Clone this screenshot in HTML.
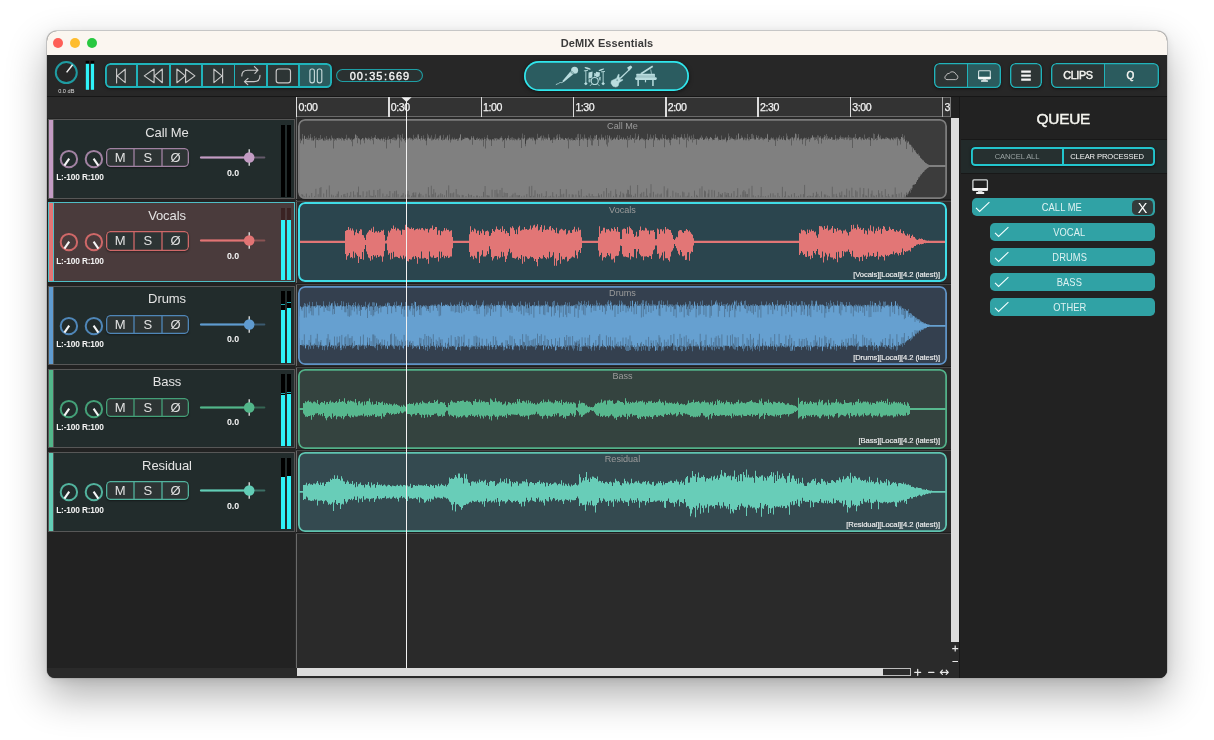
<!DOCTYPE html>
<html lang="en"><head><meta charset="utf-8"><title>DeMIX Essentials</title>
<style>
html,body{margin:0;padding:0;background:#fff;}
body{width:1214px;height:740px;overflow:hidden;position:relative;font-family:"Liberation Sans",sans-serif;}
#shadow{position:absolute;left:47px;top:31.4px;width:1120.2px;height:646.4px;border-radius:10px 10px 8px 8px;
  box-shadow:0 0 0 0.8px rgba(165,165,165,.7),0 17px 40px rgba(0,0,0,.32),0 2px 8px rgba(0,0,0,.09);}
#win{position:absolute;left:47px;top:31.4px;width:1120.2px;height:646.4px;border-radius:10px 10px 8px 8px;overflow:hidden;background:#222;}
#org{position:absolute;left:-47px;top:-31.4px;width:1214px;height:740px;will-change:transform;}
#org>*{position:absolute;}
.abs{position:absolute;}
/* title bar */
#tb{left:47px;top:31px;width:1120px;height:24px;background:#fbf6f0;}
#tb .dot{position:absolute;top:7.1px;width:10px;height:10px;border-radius:50%;}
#title{left:47px;top:31px;width:1120px;height:24px;line-height:24px;text-align:center;font-weight:700;font-size:11px;color:#3b3b3b;letter-spacing:.1px;}
/* toolbar */
#tool{left:47px;top:55px;width:1120px;height:41px;background:#272727;}
#tline{left:47px;top:95.5px;width:1120px;height:1.7px;background:#161616;}
.grp{--bc:#20b3ba;--bw:1.9px;border-radius:5.5px;background:#2d3535;overflow:hidden;box-shadow:0 1px 3px rgba(0,0,0,.5);}
.grp::after{content:"";position:absolute;left:0;top:0;right:0;bottom:0;border-radius:inherit;box-shadow:inset 0 0 0 var(--bw) var(--bc);}
.grp .dv{position:absolute;top:0;bottom:0;width:var(--bw);background:var(--bc);}
.grp .on{position:absolute;top:0;bottom:0;background:#2b5b5e;}
/* ruler */
#ruler{left:296px;top:97px;width:655px;height:20px;background:#333;box-sizing:border-box;border-top:1px solid #6a6a6a;border-bottom:1px solid #6a6a6a;}
.tick{width:1.5px;height:20px;top:97px;background:#dcdcdc;}
.rl{top:100.8px;font-size:10.6px;color:#f2f2f2;line-height:12px;letter-spacing:-.45px;-webkit-text-stroke:.25px #f2f2f2;white-space:nowrap;}
/* timeline */
#tl{left:295px;top:117px;width:656px;height:551px;background:#2a2a2a;}
#leftbg{left:47px;top:97px;width:248px;height:571px;background:#222;}
#lefttop{left:47px;top:97px;width:249px;height:21px;background:#2a2a2a;}
#botbar{left:47px;top:667.5px;width:1120px;height:11px;background:#2a2a2a;}
/* track header */
.th{left:48px;width:246.6px;height:79.6px;box-sizing:border-box;border:1px solid #575757;}
.th>*{position:absolute;}
.strip{left:0;top:0;bottom:0;width:3.5px;border-right:1px solid;box-sizing:content-box;}
.tname{left:0;width:236px;top:4.5px;text-align:center;font-size:13px;line-height:16px;color:#e4e4e4;letter-spacing:-.1px;}
.thsvg{left:-1px;top:-1px;}
.pan{left:7.2px;top:52.2px;font-size:8.3px;font-weight:700;color:#f4f4f4;line-height:10px;letter-spacing:-.15px;white-space:nowrap;}
.vol{left:164px;width:40px;text-align:center;top:47.5px;font-size:8.8px;font-weight:700;color:#f4f4f4;line-height:10px;}
.msb{left:57.3px;top:28px;width:83px;height:19.2px;border-radius:4.5px;background:#2d3434;display:flex;overflow:hidden;box-shadow:0 1px 2px rgba(0,0,0,.4);}
.msb::after{content:"";position:absolute;left:0;top:0;right:0;bottom:0;border-radius:inherit;box-shadow:inset 0 0 0 1.3px var(--mc);}
.msb span{flex:1;text-align:center;font-size:13px;line-height:19.8px;color:#e2e2e2;box-shadow:0.65px 0 0 var(--mc),inset -0.65px 0 0 var(--mc);}
.msb span:last-child{box-shadow:none;}
.mt{width:4.6px;overflow:hidden;}
.mt i{position:absolute;left:0;right:0;background:#2ff2f8;}
.mt b{position:absolute;left:0;right:0;height:1.2px;background:#1fa9b0;}
/* clips */
.clip{left:298px;width:649px;height:79.8px;border-radius:7px;overflow:hidden;}
.clip>*{position:absolute;}
.clip svg{left:0;top:0;}
.cb{left:0;top:0;right:0;bottom:0;border-radius:7px;box-sizing:border-box;}
.cl{left:0;right:0;top:2.2px;text-align:center;font-size:9.1px;line-height:10px;color:#9b9b9b;}
.ct{right:7px;bottom:3.2px;font-size:7.6px;line-height:9px;color:#f0f0f0;white-space:nowrap;letter-spacing:-.08px;-webkit-text-stroke:.15px #f0f0f0;}
.sep{left:296px;width:655px;height:1.1px;background:#1c1c1c;}
.sep.lt{background:#464646;height:.9px;}
/* right panel */
#rp{left:959.4px;top:97px;width:208px;height:582px;background:#222;border-left:1.4px solid #181818;box-sizing:border-box;}
#rp2{left:960.5px;top:140px;width:207px;height:33px;background:#222a2a;}
.hl{left:960.5px;width:207px;height:1.3px;background:#181818;}
#queue{left:959.8px;width:207px;top:109.2px;text-align:center;font-size:15.4px;line-height:20px;color:#f6f6f0;font-weight:400;-webkit-text-stroke:.45px #f6f6f0;letter-spacing:-.25px;}
.qb{font-size:7.6px;line-height:15px;text-align:center;letter-spacing:-.1px;}
.qi{background:#30a2a5;border-radius:4.8px;height:18.2px;color:#def2f2;font-size:10.6px;line-height:19px;text-align:center;letter-spacing:.1px;}
.qi span{display:inline-block;transform:scaleX(.88);position:relative;left:-3px;}
.qi.top span{left:-1.7px;}
.qi svg{position:absolute;left:3.5px;top:3.2px;}
#xbtn{left:1132.4px;top:199.5px;width:20.4px;height:15.7px;background:#333b3b;border-radius:4.5px;color:#fff;font-size:14.4px;line-height:16.6px;text-align:center;}

</style></head>
<body>
<div id="shadow"></div>
<div id="win"><div id="org">
<!-- title bar -->
<div id="tb">
  <div class="dot" style="left:6.2px;background:#fe5f57"></div>
  <div class="dot" style="left:22.9px;background:#febc2e"></div>
  <div class="dot" style="left:39.6px;background:#28c840"></div>
</div>
<div id="title">DeMIX Essentials</div>
<!-- base panels -->
<div id="leftbg"></div>
<div id="lefttop"></div>
<div id="tl"></div>
<div id="botbar"></div>
<div id="tool"></div>
<div id="tline"></div>
<!-- master knob + meter -->
<svg style="left:47px;top:55px" width="60" height="42" viewBox="47 55 60 42">
  <circle cx="66.3" cy="72.6" r="10.5" fill="none" stroke="#1f9ba1" stroke-width="2"/>
  <line x1="66.6" y1="72.4" x2="72.6" y2="64.8" stroke="#f4f4f4" stroke-width="1.5"/>
  <rect x="85.3" y="60.6" width="4.3" height="29.6" fill="#2a1b1b"/>
  <rect x="90.2" y="60.6" width="4.3" height="29.6" fill="#2a1b1b"/>
  <rect x="85.8" y="60.9" width="3.3" height="2.9" fill="#000"/>
  <rect x="90.8" y="60.9" width="3.3" height="2.9" fill="#000"/>
  <rect x="85.8" y="63.8" width="3.3" height="26" fill="#2ff2f8"/>
  <rect x="90.8" y="63.8" width="3.3" height="26" fill="#2ff2f8"/>
</svg>
<div style="left:47px;width:38.6px;top:88.3px;text-align:center;font-size:5.6px;line-height:7px;color:#ddd;">0.0 dB</div>
<!-- transport -->
<div class="grp" style="left:104.6px;top:63px;width:227.4px;height:25.4px;">
  <div class="on" style="left:194.8px;right:0"></div>
  <div class="dv" style="left:31.75px"></div>
  <div class="dv" style="left:64.25px"></div>
  <div class="dv" style="left:96.55px"></div>
  <div class="dv" style="left:128.95px"></div>
  <div class="dv" style="left:161.45px"></div>
  <div class="dv" style="left:193.85px"></div>
</div>
<svg style="left:100px;top:60px" width="240" height="32" viewBox="100 60 240 32" fill="none" stroke="#c9c9c9" stroke-width="1.15" stroke-linejoin="round" stroke-linecap="round">
  <!-- skip start -->
  <path d="M116.6 68.8V83M125.2 69.2V82.6L117.2 75.9Z"/>
  <!-- rewind -->
  <path d="M154.1 69V82.7L144.3 75.85ZM162.3 69V82.7L154.4 75.85Z"/>
  <!-- ff -->
  <path d="M176.9 69V82.7L185.3 75.85ZM185.6 69V82.7L194.9 75.85Z"/>
  <!-- skip end -->
  <path d="M222.6 68.8V83M213.9 69.2V82.6L222 75.9Z"/>
  <!-- loop -->
  <path d="M241.8 76C241.8 72.4 244 70.2 247.6 70.2H257.8M254.4 66.7L258 70.2L254.9 73.3"/>
  <path d="M260 75.4C260 79 257.8 81.6 254 81.6H244.6M248 78.4L244.4 81.6L247.8 84.7"/>
  <!-- stop -->
  <rect x="276.2" y="69" width="14.3" height="13.8" rx="2.4"/>
  <!-- pause -->
  <rect x="309.9" y="69" width="4.5" height="13.8" rx="2" stroke="#c4d8d9"/>
  <rect x="317.3" y="69" width="4.5" height="13.8" rx="2" stroke="#c4d8d9"/>
</svg>
<!-- time display -->
<div style="left:336.2px;top:69.2px;width:86.6px;height:13.2px;border-radius:6.5px;background:#2a3131;box-shadow:inset 0 0 0 1.1px #1e9ea4;"></div>
<div id="time" style="left:336.2px;top:70.1px;width:87.4px;height:13.2px;line-height:13.6px;text-align:center;font-size:11px;font-weight:400;-webkit-text-stroke:.35px #f6f6f6;color:#f6f6f6;letter-spacing:.95px;white-space:nowrap;">00<span style="margin:0 .7px">:</span>35<span style="margin:0 .7px">:</span>669</div>
<!-- instruments pill -->
<div style="left:523.8px;top:60.9px;width:165.6px;height:30.5px;border-radius:16px;background:#2b5c60;box-shadow:inset 0 0 0 1.7px #30e8ee,0 1px 4px rgba(0,0,0,.55);"></div>
<svg style="left:550px;top:62px" width="115" height="28" viewBox="550 62 115 28" fill="#b9dcde" stroke="none">
  <!-- microphone -->
  <g>
    <circle cx="574.6" cy="70.2" r="3.5"/>
    <path d="M573.5 74.1L570.6 71.2L562.4 81.1L563.5 82.2Z"/>
    <path d="M571.2 70.6L574.2 73.6M570.3 71.6L573.2 74.6" stroke="#2b5c60" stroke-width="0.55" fill="none"/>
    <path d="M563 81.9C561.6 83.6 560.8 82 559.6 82.7C558.6 83.3 558.6 84.1 557.4 83.9L556.2 84.5" fill="none" stroke="#b9dcde" stroke-width="0.85" stroke-linecap="round"/>
  </g>
  <!-- drums -->
  <g>
    <ellipse cx="587.6" cy="68.4" rx="3.3" ry="0.85" transform="rotate(16 587.6 68.4)"/>
    <ellipse cx="601.4" cy="69.7" rx="3" ry="0.8" transform="rotate(-18 601.4 69.7)"/>
    <path d="M585.85 70.4V83M603.15 71.6V83M583.9 70.9L588 70.3M601 71.9L605 71.4" fill="none" stroke="#b9dcde" stroke-width="0.9"/>
    <path d="M585.85 82L587.7 83.7L585.85 85.2L584 83.7ZM603.15 82L605 83.7L603.15 85.2L601.3 83.7Z"/>
    <path d="M588.6 72.4L592.6 71.6L592.2 77.6L588.4 78.8ZM596.2 71.8L600 72.6L599.6 76.2L597 77.2L594.6 75.6Z"/>
    <path d="M588.4 79.4L590.6 78.8L590.2 82.4L588.6 82.2ZM598.6 77.4L600.8 76.8L600.6 80.4L599.4 80.6Z" opacity=".8"/>
    <circle cx="594.7" cy="81" r="3.55" fill="none" stroke="#b9dcde" stroke-width="1.15"/>
    <path d="M591.6 84.2L590 85.8M597.8 84.2L599.4 85.8M594.7 73V76.6" fill="none" stroke="#b9dcde" stroke-width="0.9"/>
  </g>
  <!-- guitar -->
  <g>
    <path d="M628.9 69.2L629.8 70.1L620.6 79.1L619.6 78.1Z"/>
    <path d="M627.2 67.6L630.6 65.6L631.9 66.4L632.2 67.6L629.6 70.4L628 69.6Z"/>
    <path d="M618.36 74.33L619.25 74.58L618.95 76.8L619.94 78.39L620.3 79.8L622.7 79.5L622.81 80.17L619.1 82.49L618.11 85.95L615.89 87.09L612.92 86.2L610.94 83.23L611.44 80.76L616.63 78.29Z" stroke="#b9dcde" stroke-width="0.5" stroke-linejoin="round"/>
    <rect x="616.4" y="79.4" width="1.6" height="1.6" fill="#2b5c60" opacity=".45" transform="rotate(-45 617.2 80.2)"/>
  </g>
  <!-- piano -->
  <g>
    <path d="M640.2 73.3L652.3 65.5L653.2 66.9L641.9 74.3Z"/>
    <path d="M650.7 69.4L651.5 73.8" fill="none" stroke="#b9dcde" stroke-width="0.7"/>
    <rect x="636.4" y="73.8" width="18.5" height="3.8" rx="0.5"/>
    <rect x="635.1" y="77.2" width="21.7" height="2.7" rx="1.1"/>
    <rect x="637" y="75.6" width="17.3" height="1" fill="#2b5c60" opacity=".28"/>
    <rect x="637.4" y="79.6" width="1.5" height="6.4"/>
    <rect x="652.2" y="79.6" width="1.5" height="6.4"/>
    <rect x="644.9" y="79.6" width="1.2" height="2.7"/>
  </g>
</svg>
<!-- right buttons -->
<div class="grp" style="left:934.2px;top:63px;width:67px;height:25.4px;--bw:1.35px"><div class="on" style="left:33.4px;right:0"></div><div class="dv" style="left:32.6px"></div></div>
<div class="grp" style="left:1009.6px;top:63px;width:32.8px;height:25.4px;--bw:1.35px"></div>
<div class="grp" style="left:1050.8px;top:63px;width:108.2px;height:25.4px;--bw:1.35px"><div class="on" style="left:54.4px;right:0"></div><div class="dv" style="left:53.1px"></div></div>
<svg style="left:930px;top:60px" width="120" height="32" viewBox="930 60 120 32" fill="none" stroke="#b8b8b8" stroke-width="1" stroke-linejoin="round" stroke-linecap="round">
  <!-- cloud -->
  <path d="M947.6 79.6H955.6A2.6 2.6 0 0 0 956 74.5A3.8 3.8 0 0 0 949.2 73.4A2.4 2.4 0 0 0 946.4 75.4A2.15 2.15 0 0 0 947.6 79.6Z"/>
  <!-- monitor -->
  <rect x="978.6" y="70.7" width="11.7" height="8" rx="0.9" stroke="#cfe0e0" stroke-width="1.1"/>
  <rect x="978.1" y="76.7" width="12.7" height="2.5" rx="0.7" fill="#f2f6f6" stroke="none"/>
  <path d="M983 79.1H986L986.6 80.5H982.4Z" fill="#c4d4d4" stroke="none"/>
  <rect x="981" y="80.3" width="7" height="1.5" rx="0.6" fill="#eef4f4" stroke="none"/>
  <!-- hamburger -->
  <path d="M1021.2 71.6H1030.8M1021.2 75.6H1030.8M1021.2 79.6H1030.8" stroke="#f4f4f4" stroke-width="2.3" stroke-linecap="butt"/>
</svg>
<div style="left:1051px;width:54px;top:69px;text-align:center;font-size:10.8px;font-weight:400;-webkit-text-stroke:.45px #f4f4f0;line-height:13px;color:#f4f4f0;letter-spacing:-.35px;">CLIPS</div>
<div style="left:1104px;width:53px;top:69px;text-align:center;font-size:10px;font-weight:400;-webkit-text-stroke:.5px #f4f4f0;line-height:13.6px;color:#f4f4f0;">Q</div>
<!-- ruler -->
<div id="ruler"></div>
<div class="tick" style="left:295.9px"></div><div class="rl" style="left:298.5px">0:00</div>
<div class="tick" style="left:388.2px"></div><div class="rl" style="left:390.8px">0:30</div>
<div class="tick" style="left:480.5px"></div><div class="rl" style="left:483.1px">1:00</div>
<div class="tick" style="left:572.8px"></div><div class="rl" style="left:575.4px">1:30</div>
<div class="tick" style="left:665.0px"></div><div class="rl" style="left:667.7px">2:00</div>
<div class="tick" style="left:757.4px"></div><div class="rl" style="left:760.0px">2:30</div>
<div class="tick" style="left:849.6px"></div><div class="rl" style="left:852.3px">3:00</div>
<div class="tick" style="left:942.2px;width:1px;background:#b0b0b0"></div><div class="tick" style="left:950.2px;width:1px;background:#777"></div><div class="rl" style="left:944.6px;width:5.6px;overflow:hidden">3:30</div>
<div style="left:295.5px;top:117px;width:1px;height:551px;background:#6a6a6a"></div>
<!-- track separators -->
<div class="sep" style="top:199.3px"></div><div class="sep lt" style="top:200.8px"></div>
<div class="sep" style="top:282.5px"></div><div class="sep lt" style="top:284px"></div>
<div class="sep" style="top:365.7px"></div><div class="sep lt" style="top:367.2px"></div>
<div class="sep" style="top:448.9px"></div><div class="sep lt" style="top:450.4px"></div>
<div class="sep" style="top:532.1px"></div><div class="sep lt" style="top:533.4px"></div>

<div class="th" style="top:119.2px;background:#222c2c;border-color:#575757">
<div class="strip" style="background:#c39cc4;border-color:#575757"></div>
<div class="tname">Call Me</div>
<svg class="thsvg" width="247" height="80" viewBox="0 0 247 80">
<circle cx="20.9" cy="40.1" r="8.2" fill="none" stroke="#a182a2" stroke-width="2"/>
<line x1="21.2" y1="39.6" x2="16.4" y2="46.7" stroke="#f6f6f6" stroke-width="2.1" stroke-linecap="butt"/>
<circle cx="45.9" cy="40.1" r="8.2" fill="none" stroke="#a182a2" stroke-width="2"/>
<line x1="45.6" y1="39.6" x2="50.4" y2="46.7" stroke="#f6f6f6" stroke-width="2.1" stroke-linecap="butt"/>
<line x1="153" y1="38.5" x2="216.3" y2="38.5" stroke="#c39cc4" stroke-opacity="0.42" stroke-width="2.1" stroke-linecap="round"/>
<line x1="153" y1="38.5" x2="200" y2="38.5" stroke="#c39cc4" stroke-width="2.2" stroke-linecap="round"/>
<line x1="201.2" y1="30.2" x2="201.2" y2="46.8" stroke="#f4f4f4" stroke-width="1.2"/>
<circle cx="201.2" cy="38.5" r="5.3" fill="#c39cc4"/>
</svg>
<div class="pan">L:-100 R:100</div>
<div class="msb" style="--mc:#a182a2"><span>M</span><span>S</span><span>&Oslash;</span></div>
<div class="vol">0.0</div>
<div class="mt" style="left:231.8px;top:4.7px;height:71.7px;background:#000">
</div>
<div class="mt" style="left:237.9px;top:4.7px;height:71.7px;background:#000">
</div>
</div>
<div class="th" style="top:202.4px;background:#4a3b3c;border-color:#4fbec6">
<div class="strip" style="background:#e27474;border-color:#4fbec6"></div>
<div class="tname">Vocals</div>
<svg class="thsvg" width="247" height="80" viewBox="0 0 247 80">
<circle cx="20.9" cy="40.1" r="8.2" fill="none" stroke="#cf6868" stroke-width="2"/>
<line x1="21.2" y1="39.6" x2="16.4" y2="46.7" stroke="#f6f6f6" stroke-width="2.1" stroke-linecap="butt"/>
<circle cx="45.9" cy="40.1" r="8.2" fill="none" stroke="#cf6868" stroke-width="2"/>
<line x1="45.6" y1="39.6" x2="50.4" y2="46.7" stroke="#f6f6f6" stroke-width="2.1" stroke-linecap="butt"/>
<line x1="153" y1="38.5" x2="216.3" y2="38.5" stroke="#e27474" stroke-opacity="0.42" stroke-width="2.1" stroke-linecap="round"/>
<line x1="153" y1="38.5" x2="200" y2="38.5" stroke="#e27474" stroke-width="2.2" stroke-linecap="round"/>
<line x1="201.2" y1="30.2" x2="201.2" y2="46.8" stroke="#f4f4f4" stroke-width="1.2"/>
<circle cx="201.2" cy="38.5" r="5.3" fill="#e27474"/>
</svg>
<div class="pan">L:-100 R:100</div>
<div class="msb" style="--mc:#cf6868"><span>M</span><span>S</span><span>&Oslash;</span></div>
<div class="vol">0.0</div>
<div class="mt" style="left:231.8px;top:4.7px;height:71.7px;background:#3a2323">
<i style="top:11.5px;height:60.2px"></i>
</div>
<div class="mt" style="left:237.9px;top:4.7px;height:71.7px;background:#3a2323">
<i style="top:11.5px;height:60.2px"></i>
</div>
</div>
<div class="th" style="top:285.6px;background:#222c2c;border-color:#575757">
<div class="strip" style="background:#5f9bd0;border-color:#575757"></div>
<div class="tname">Drums</div>
<svg class="thsvg" width="247" height="80" viewBox="0 0 247 80">
<circle cx="20.9" cy="40.1" r="8.2" fill="none" stroke="#4f86b8" stroke-width="2"/>
<line x1="21.2" y1="39.6" x2="16.4" y2="46.7" stroke="#f6f6f6" stroke-width="2.1" stroke-linecap="butt"/>
<circle cx="45.9" cy="40.1" r="8.2" fill="none" stroke="#4f86b8" stroke-width="2"/>
<line x1="45.6" y1="39.6" x2="50.4" y2="46.7" stroke="#f6f6f6" stroke-width="2.1" stroke-linecap="butt"/>
<line x1="153" y1="38.5" x2="216.3" y2="38.5" stroke="#5f9bd0" stroke-opacity="0.42" stroke-width="2.1" stroke-linecap="round"/>
<line x1="153" y1="38.5" x2="200" y2="38.5" stroke="#5f9bd0" stroke-width="2.2" stroke-linecap="round"/>
<line x1="201.2" y1="30.2" x2="201.2" y2="46.8" stroke="#f4f4f4" stroke-width="1.2"/>
<circle cx="201.2" cy="38.5" r="5.3" fill="#5f9bd0"/>
</svg>
<div class="pan">L:-100 R:100</div>
<div class="msb" style="--mc:#4f86b8"><span>M</span><span>S</span><span>&Oslash;</span></div>
<div class="vol">0.0</div>
<div class="mt" style="left:231.8px;top:4.7px;height:71.7px;background:#000">
<i style="top:18.9px;height:52.8px"></i>
<b style="top:12.7px"></b>
</div>
<div class="mt" style="left:237.9px;top:4.7px;height:71.7px;background:#000">
<i style="top:17.2px;height:54.5px"></i>
<b style="top:10.7px"></b>
</div>
</div>
<div class="th" style="top:368.8px;background:#222c2c;border-color:#575757">
<div class="strip" style="background:#52b68a;border-color:#575757"></div>
<div class="tname">Bass</div>
<svg class="thsvg" width="247" height="80" viewBox="0 0 247 80">
<circle cx="20.9" cy="40.1" r="8.2" fill="none" stroke="#44a078" stroke-width="2"/>
<line x1="21.2" y1="39.6" x2="16.4" y2="46.7" stroke="#f6f6f6" stroke-width="2.1" stroke-linecap="butt"/>
<circle cx="45.9" cy="40.1" r="8.2" fill="none" stroke="#44a078" stroke-width="2"/>
<line x1="45.6" y1="39.6" x2="50.4" y2="46.7" stroke="#f6f6f6" stroke-width="2.1" stroke-linecap="butt"/>
<line x1="153" y1="38.5" x2="216.3" y2="38.5" stroke="#52b68a" stroke-opacity="0.42" stroke-width="2.1" stroke-linecap="round"/>
<line x1="153" y1="38.5" x2="200" y2="38.5" stroke="#52b68a" stroke-width="2.2" stroke-linecap="round"/>
<line x1="201.2" y1="30.2" x2="201.2" y2="46.8" stroke="#f4f4f4" stroke-width="1.2"/>
<circle cx="201.2" cy="38.5" r="5.3" fill="#52b68a"/>
</svg>
<div class="pan">L:-100 R:100</div>
<div class="msb" style="--mc:#44a078"><span>M</span><span>S</span><span>&Oslash;</span></div>
<div class="vol">0.0</div>
<div class="mt" style="left:231.8px;top:4.7px;height:71.7px;background:#000">
<i style="top:21px;height:50.7px"></i>
<b style="top:18.8px"></b>
</div>
<div class="mt" style="left:237.9px;top:4.7px;height:71.7px;background:#000">
<i style="top:19.5px;height:52.2px"></i>
<b style="top:17.5px"></b>
</div>
</div>
<div class="th" style="top:452px;background:#222c2c;border-color:#575757">
<div class="strip" style="background:#62cdb6;border-color:#575757"></div>
<div class="tname">Residual</div>
<svg class="thsvg" width="247" height="80" viewBox="0 0 247 80">
<circle cx="20.9" cy="40.1" r="8.2" fill="none" stroke="#52b39e" stroke-width="2"/>
<line x1="21.2" y1="39.6" x2="16.4" y2="46.7" stroke="#f6f6f6" stroke-width="2.1" stroke-linecap="butt"/>
<circle cx="45.9" cy="40.1" r="8.2" fill="none" stroke="#52b39e" stroke-width="2"/>
<line x1="45.6" y1="39.6" x2="50.4" y2="46.7" stroke="#f6f6f6" stroke-width="2.1" stroke-linecap="butt"/>
<line x1="153" y1="38.5" x2="216.3" y2="38.5" stroke="#62cdb6" stroke-opacity="0.42" stroke-width="2.1" stroke-linecap="round"/>
<line x1="153" y1="38.5" x2="200" y2="38.5" stroke="#62cdb6" stroke-width="2.2" stroke-linecap="round"/>
<line x1="201.2" y1="30.2" x2="201.2" y2="46.8" stroke="#f4f4f4" stroke-width="1.2"/>
<circle cx="201.2" cy="38.5" r="5.3" fill="#62cdb6"/>
</svg>
<div class="pan">L:-100 R:100</div>
<div class="msb" style="--mc:#52b39e"><span>M</span><span>S</span><span>&Oslash;</span></div>
<div class="vol">0.0</div>
<div class="mt" style="left:231.8px;top:4.7px;height:71.7px;background:#000">
<i style="top:19.8px;height:51.9px"></i>
</div>
<div class="mt" style="left:237.9px;top:4.7px;height:71.7px;background:#000">
<i style="top:18.3px;height:53.4px"></i>
</div>
</div>
<div class="clip" style="top:119.2px;background:#3c3c3c">
<svg width="649" height="80" viewBox="298 119.2 649 80" preserveAspectRatio="none"><path d="M299,140.1H299.5V139.9H300V139H300.5V143.5H301V140.7H301.5V140.7H302V138.7H302.5V134.1H303V138.9H303.5V144.4H304V136.1H304.5V135.6H305V139.3H305.5V139.3H306V139.5H306.5V137.6H307V138.2H307.5V139.9H308V140H308.5V135.7H309V139.7H309.5V138.1H310V134.2H310.5V137.7H311V140.7H311.5V138.4H312V140.7H312.5V137.8H313V140.6H313.5V140.7H314V136.3H314.5V139.5H315V138.5H315.5V147.9H316V140.3H316.5V137.7H317V140H317.5V140.3H318V138.1H318.5V140.6H319V140.3H319.5V138.4H320V140H320.5V135.1H321V139H321.5V139.5H322V139.4H322.5V138.1H323V141.2H323.5V140.1H324V140.9H324.5V137.8H325V139H325.5V140.6H326V136.1H326.5V140.1H327V139H327.5V140.4H328V140.7H328.5V139.1H329V138.9H329.5V137.9H330V140.9H330.5V139.5H331V135.7H331.5V140.5H332V138H332.5V138.8H333V139H333.5V148.7H334V138.6H334.5V140.9H335V139.4H335.5V139.9H336V140.7H336.5V138.5H337V138.5H337.5V138.3H338V139.8H338.5V137.9H339V139.6H339.5V138.1H340V138.9H340.5V139H341V140.7H341.5V137.6H342V138.5H342.5V138.5H343V139.5H343.5V140.7H344V140.9H344.5V139.3H345V138.6H345.5V138.9H346V140.1H346.5V134.9H347V140.4H347.5V138.7H348V138H348.5V138.7H349V139.5H349.5V137.9H350V139.7H350.5V139.9H351V141.8H351.5V138.6H352V140H352.5V146.5H353V139.6H353.5V139.3H354V138.1H354.5V139.4H355V134.3H355.5V135.2H356V138.3H356.5V135.5H357V136.1H357.5V143.5H358V138.8H358.5V138.2H359V138.7H359.5V139.4H360V144.8H360.5V140.4H361V139.8H361.5V139.2H362V138.4H362.5V138.3H363V140.7H363.5V138.5H364V143.5H364.5V139.7H365V138H365.5V137.8H366V138.8H366.5V138.5H367V138.8H367.5V140.2H368V137.6H368.5V139.1H369V139.9H369.5V138.1H370V140.7H370.5V139.1H371V139.3H371.5V136.6H372V140.4H372.5V138.3H373V144.5H373.5V138.1H374V137.8H374.5V137.7H375V135.3H375.5V138.5H376V139.2H376.5V139.1H377V139.7H377.5V137.9H378V138.1H378.5V139.2H379V140.3H379.5V139.2H380V140.8H380.5V139.2H381V138.2H381.5V139.3H382V140.7H382.5V139.5H383V137.8H383.5V139.3H384V141.9H384.5V139.3H385V140.3H385.5V137.8H386V148.6H386.5V140.2H387V139.9H387.5V138.8H388V136.4H388.5V140.1H389V139.1H389.5V139.7H390V139.1H390.5V143.5H391V139.1H391.5V138.9H392V140.1H392.5V138.2H393V139.9H393.5V137.8H394V137.6H394.5V140.5H395V138.5H395.5V140.6H396V139.5H396.5V140.5H397V138.6H397.5V134.8H398V137.7H398.5V134.6H399V138.6H399.5V147.9H400V135.3H400.5V140.4H401V141.7H401.5V137.8H402V134H402.5V138.3H403V139.3H403.5V139.5H404V140.9H404.5V138.1H405V142.6H405.5V140.3H406V148.7H406.5V138.2H407V138H407.5V139.6H408V139.2H408.5V138.2H409V137.8H409.5V138.3H410V139.6H410.5V138H411V138.3H411.5V139.5H412V140.7H412.5V139.3H413V134.9H413.5V140.1H414V138.7H414.5V138.7H415V139.1H415.5V137.5H416V138.5H416.5V137.6H417V134.6H417.5V139.6H418V135.6H418.5V134.2H419V139.2H419.5V139H420V138.8H420.5V140.7H421V138.3H421.5V136.2H422V140.3H422.5V138.8H423V135.5H423.5V138.9H424V139.9H424.5V139H425V138.5H425.5V140.9H426V140.8H426.5V145.5H427V138.4H427.5V134H428V135.5H428.5V137.6H429V139.1H429.5V138.5H430V137.6H430.5V138.9H431V135.4H431.5V140.7H432V140.5H432.5V138.6H433V140H433.5V139.5H434V139.1H434.5V137.7H435V140.1H435.5V134.5H436V139.7H436.5V138.6H437V138.9H437.5V138.4H438V140.5H438.5V137.9H439V135.9H439.5V138.8H440V136.5H440.5V135.1H441V139.6H441.5V140.2H442V138.4H442.5V140.6H443V134.9H443.5V140.2H444V140H444.5V139.6H445V137.6H445.5V139H446V137.8H446.5V139.6H447V136.5H447.5V135.3H448V139.9H448.5V140.6H449V138.7H449.5V134.6H450V139.9H450.5V142.6H451V140.5H451.5V139H452V137.7H452.5V139.4H453V139.9H453.5V139.5H454V137.9H454.5V139.7H455V139.7H455.5V139.6H456V139H456.5V139.1H457V139H457.5V141.3H458V140.8H458.5V139H459V137.6H459.5V138.2H460V134.4H460.5V134.6H461V140.6H461.5V140.4H462V138.7H462.5V140.1H463V139.1H463.5V139.5H464V137.6H464.5V139.2H465V138.4H465.5V137.8H466V138.1H466.5V138H467V138.1H467.5V137.6H468V139.1H468.5V138.2H469V139.5H469.5V140.4H470V140.3H470.5V139.4H471V137.6H471.5V136.3H472V138.3H472.5V144.9H473V137.8H473.5V136.1H474V140.1H474.5V138.9H475V140.2H475.5V140.3H476V139.8H476.5V138.1H477V140H477.5V137.8H478V139H478.5V139.2H479V140.7H479.5V138.2H480V139.1H480.5V139.9H481V138.6H481.5V140.8H482V139.6H482.5V138.5H483V140.3H483.5V146.6H484V139.1H484.5V137.5H485V139.1H485.5V148.7H486V138H486.5V140.6H487V138.4H487.5V135.3H488V138.9H488.5V139.8H489V139.5H489.5V140.6H490V140.2H490.5V139.1H491V146.1H491.5V140.6H492V139.3H492.5V139.6H493V140.5H493.5V139.3H494V138.1H494.5V140.8H495V138.5H495.5V138.9H496V140.8H496.5V138.2H497V138.8H497.5V139.6H498V139.8H498.5V139.5H499V140H499.5V138.4H500V137.7H500.5V138.4H501V138.1H501.5V136.4H502V138.5H502.5V141.7H503V140.5H503.5V140.3H504V148.1H504.5V139.4H505V138.7H505.5V138.1H506V139.7H506.5V140.8H507V138.5H507.5V138.2H508V138.8H508.5V135.7H509V140.5H509.5V139.1H510V138.1H510.5V140.3H511V137.8H511.5V139.7H512V140.4H512.5V137.5H513V138.4H513.5V140.2H514V138.7H514.5V140.6H515V138.9H515.5V139.7H516V139.6H516.5V140.4H517V140.4H517.5V139H518V138.9H518.5V137.8H519V138.1H519.5V140.4H520V139.9H520.5V140H521V138H521.5V148.1H522V133.8H522.5V138.6H523V138.6H523.5V139.5H524V138.1H524.5V135.3H525V143.9H525.5V146.5H526V139.7H526.5V140.7H527V140.3H527.5V138.8H528V139.4H528.5V138.5H529V138.3H529.5V137.5H530V137.9H530.5V139.4H531V137.8H531.5V139.1H532V137.8H532.5V140.6H533V137.8H533.5V138.8H534V139.8H534.5V140.6H535V144.5H535.5V140.6H536V139H536.5V139.8H537V140H537.5V133.9H538V137.9H538.5V138.1H539V138.3H539.5V137.8H540V136.2H540.5V137.6H541V135.7H541.5V140.6H542V138.1H542.5V139.6H543V140.7H543.5V135.7H544V137.7H544.5V139.2H545V139.8H545.5V137.8H546V138H546.5V139.2H547V140.3H547.5V138.7H548V137.8H548.5V134.5H549V137.8H549.5V138.4H550V140.8H550.5V140.5H551V139.8H551.5V140.1H552V143.1H552.5V139.6H553V137.8H553.5V140H554V137.7H554.5V139.9H555V140.5H555.5V139.3H556V139H556.5V135.8H557V138.1H557.5V134.4H558V139.9H558.5V140.2H559V137.5H559.5V134.5H560V137.7H560.5V140.2H561V138.6H561.5V138.6H562V139.1H562.5V137.9H563V139H563.5V140.2H564V140.2H564.5V140H565V138.2H565.5V138.1H566V139.1H566.5V138.8H567V140.7H567.5V138.4H568V137.8H568.5V148.6H569V139.3H569.5V139.9H570V140.6H570.5V138.9H571V138.1H571.5V140.3H572V140.7H572.5V138.7H573V139.9H573.5V140.5H574V140.2H574.5V140.3H575V138H575.5V140.6H576V139.6H576.5V137.5H577V134.4H577.5V140.3H578V138.3H578.5V134H579V146.2H579.5V140.5H580V134.4H580.5V140H581V138.9H581.5V139.2H582V139.6H582.5V137.5H583V140.7H583.5V138.6H584V134.6H584.5V138.8H585V139.2H585.5V137.9H586V138.1H586.5V139.6H587V147.3H587.5V140.1H588V139.7H588.5V137.4H589V137.9H589.5V139.5H590V135.5H590.5V140.7H591V145.4H591.5V138.4H592V139.6H592.5V145.6H593V138.3H593.5V140.7H594V139.5H594.5V135.6H595V139H595.5V135.9H596V134.9H596.5V135.3H597V140.3H597.5V139.9H598V138.5H598.5V146.3H599V139.4H599.5V137.8H600V139.8H600.5V140H601V134.8H601.5V138H602V139.8H602.5V137.7H603V138.4H603.5V137.5H604V140H604.5V140.5H605V139.4H605.5V135.6H606V139.8H606.5V144.7H607V146.6H607.5V135.3H608V142.7H608.5V138.4H609V135.5H609.5V136.4H610V138.8H610.5V139.7H611V140.7H611.5V137.7H612V139.9H612.5V140.1H613V138.7H613.5V139.5H614V137.6H614.5V138.6H615V139.4H615.5V139.8H616V137.8H616.5V137.7H617V135.1H617.5V139.5H618V140.3H618.5V140H619V140H619.5V135.4H620V139.1H620.5V138.9H621V138.9H621.5V137.5H622V139.6H622.5V139.7H623V138.4H623.5V137.5H624V140.2H624.5V139.1H625V139.5H625.5V138.2H626V140H626.5V139.7H627V147.6H627.5V136.2H628V140.4H628.5V138.1H629V140.2H629.5V137.8H630V135.1H630.5V139.4H631V139.9H631.5V139.6H632V138.2H632.5V137.9H633V139.3H633.5V138.6H634V138H634.5V143H635V140.1H635.5V133.8H636V140.3H636.5V139.3H637V139.4H637.5V137.4H638V136.2H638.5V134.4H639V140.3H639.5V140.7H640V139.1H640.5V139.7H641V137.9H641.5V139.4H642V138.1H642.5V139.4H643V138.9H643.5V140.2H644V140.7H644.5V139.1H645V148.5H645.5V140.3H646V139.8H646.5V139.1H647V139.9H647.5V134H648V140.5H648.5V140.2H649V137.8H649.5V139.3H650V139.4H650.5V134.6H651V139.8H651.5V137.8H652V139.2H652.5V138.3H653V147.2H653.5V135.5H654V139.7H654.5V140.7H655V137.5H655.5V134.2H656V138.2H656.5V138H657V138.1H657.5V140.4H658V139.4H658.5V139.9H659V140.7H659.5V140H660V139.5H660.5V138H661V138.6H661.5V139.8H662V139.6H662.5V134.4H663V138.2H663.5V138.4H664V147.4H664.5V139.3H665V135.3H665.5V138.9H666V140H666.5V139.6H667V140.4H667.5V139.3H668V140H668.5V138.3H669V142.9H669.5V139.6H670V140.2H670.5V145.4H671V140H671.5V137.7H672V138.6H672.5V138.8H673V134.5H673.5V138.5H674V139.4H674.5V138.7H675V139H675.5V135.2H676V138.7H676.5V140.2H677V137.3H677.5V139.7H678V137.4H678.5V137.8H679V144.5H679.5V137.9H680V137.5H680.5V138H681V137.3H681.5V134.5H682V138H682.5V138.9H683V140H683.5V138.5H684V134.2H684.5V139.9H685V137.8H685.5V138.8H686V138H686.5V147.8H687V134H687.5V140.3H688V141.4H688.5V137.6H689V135.9H689.5V137.7H690V140H690.5V139.2H691V135.6H691.5V139.8H692V138.3H692.5V142.7H693V140.3H693.5V134.7H694V140H694.5V138.4H695V139.5H695.5V139.3H696V145H696.5V139.3H697V139H697.5V139.5H698V139.9H698.5V139.7H699V139.7H699.5V138.4H700V137.5H700.5V138.2H701V139.2H701.5V135.7H702V137.5H702.5V138.3H703V139.9H703.5V140.2H704V139.8H704.5V139.5H705V137.8H705.5V138.8H706V136.2H706.5V139.4H707V138.4H707.5V137.6H708V140.6H708.5V139.1H709V139.1H709.5V138.4H710V137.4H710.5V137.3H711V137.9H711.5V138.3H712V140.5H712.5V139.3H713V140H713.5V140H714V140.2H714.5V138.2H715V134.6H715.5V138.2H716V137.9H716.5V138H717V136.4H717.5V137.5H718V140.6H718.5V138.9H719V140.3H719.5V139.7H720V140.3H720.5V140.2H721V135.6H721.5V139.8H722V140.5H722.5V139.1H723V139.1H723.5V140.3H724V140.2H724.5V138.9H725V138.6H725.5V137.4H726V140.6H726.5V142.4H727V140.1H727.5V140.6H728V133.7H728.5V137.8H729V136.2H729.5V140.3H730V139.6H730.5V138.5H731V137.5H731.5V139H732V139.3H732.5V138.2H733V139.4H733.5V139.1H734V139.2H734.5V140.5H735V140.5H735.5V138.8H736V139.9H736.5V135.5H737V139.9H737.5V139H738V133.7H738.5V133.7H739V138.6H739.5V139.6H740V138.7H740.5V139H741V138.1H741.5V135.7H742V138H742.5V137.7H743V139.7H743.5V140.4H744V137.8H744.5V139.6H745V138H745.5V140.5H746V140.5H746.5V138.8H747V138.5H747.5V134.3H748V140.6H748.5V139.2H749V137.3H749.5V140.4H750V139.2H750.5V139.4H751V139.2H751.5V134.3H752V134H752.5V138.8H753V135.5H753.5V138.8H754V139.9H754.5V138.8H755V140.2H755.5V139.1H756V135.3H756.5V137.5H757V138.3H757.5V138H758V135.9H758.5V140H759V140.1H759.5V138.6H760V139.3H760.5V137.8H761V138.7H761.5V137.3H762V138.3H762.5V139.8H763V138.7H763.5V140.4H764V139.4H764.5V139.2H765V138.7H765.5V137.6H766V139H766.5V138.1H767V134H767.5V134.8H768V139.5H768.5V142.1H769V140.3H769.5V139.9H770V138.8H770.5V140.2H771V138.7H771.5V137.5H772V139.4H772.5V138.2H773V137.7H773.5V139.7H774V140.6H774.5V139.8H775V139.8H775.5V146.3H776V139.7H776.5V137.7H777V141.3H777.5V138.8H778V138.8H778.5V137.5H779V139.8H779.5V135.4H780V139.8H780.5V139.4H781V137.4H781.5V138.7H782V139.8H782.5V140.3H783V138.4H783.5V136.1H784V140.2H784.5V139.6H785V140.4H785.5V140.4H786V133.6H786.5V137.7H787V138.9H787.5V135.9H788V139.4H788.5V140H789V139.2H789.5V140.4H790V138.7H790.5V138.7H791V145.7H791.5V137.4H792V137.4H792.5V137.7H793V140.6H793.5V138.6H794V138.5H794.5V137.4H795V133.6H795.5V133.9H796V140.5H796.5V134.4H797V138.7H797.5V137.9H798V134.1H798.5V137.8H799V139.5H799.5V140.6H800V139.7H800.5V138.8H801V138.3H801.5V139.8H802V140H802.5V144.5H803V139.5H803.5V138.4H804V138.8H804.5V137.6H805V146H805.5V138.1H806V137.9H806.5V140.4H807V139.8H807.5V139.2H808V139.4H808.5V137.5H809V139.3H809.5V141.9H810V137.9H810.5V139.6H811V138.1H811.5V137.8H812V135.3H812.5V135.9H813V137.6H813.5V137.4H814V137.4H814.5V140.5H815V140.2H815.5V137.6H816V137.4H816.5V139.3H817V140.6H817.5V135.4H818V135.8H818.5V144H819V138H819.5V137.4H820V136.1H820.5V138H821V138.9H821.5V143.7H822V137.9H822.5V139H823V137.7H823.5V140H824V137.3H824.5V135.2H825V135.9H825.5V139.9H826V134.1H826.5V138.4H827V140H827.5V136.2H828V138.5H828.5V139H829V139.5H829.5V137.6H830V139.2H830.5V139H831V137.5H831.5V137.4H832V137.6H832.5V140.2H833V140H833.5V139.8H834V140.1H834.5V139.6H835V135.3H835.5V138.9H836V138.8H836.5V140.6H837V139.7H837.5V138.4H838V140.3H838.5V139H839V137.3H839.5V139.1H840V135.7H840.5V137.9H841V137.5H841.5V139.1H842V137.4H842.5V138.9H843V137.7H843.5V139.4H844V139.9H844.5V137.9H845V137.5H845.5V137.9H846V137.8H846.5V140H847V139.6H847.5V137.5H848V135.3H848.5V138.5H849V137.4H849.5V140.4H850V140.2H850.5V137.6H851V140H851.5V138H852V138.5H852.5V148.1H853V138H853.5V137.6H854V137.4H854.5V138.9H855V139.4H855.5V134.1H856V138.4H856.5V138.2H857V139.5H857.5V139.9H858V138.2H858.5V139.5H859V137.5H859.5V137.3H860V137.3H860.5V139.4H861V138.8H861.5V140.5H862V138.8H862.5V138H863V139.9H863.5V139.8H864V140.3H864.5V134.8H865V138.4H865.5V139.2H866V139H866.5V140.2H867V138.2H867.5V138.7H868V137.4H868.5V139.7H869V137.2H869.5V139.9H870V140.4H870.5V146.2H871V138.1H871.5V138H872V138.2H872.5V139.1H873V133.6H873.5V140.4H874V134.3H874.5V140.1H875V138.6H875.5V139.2H876V138.2H876.5V140.4H877V140.1H877.5V136.2H878V135H878.5V133.9H879V138.6H879.5V137.2H880V135.7H880.5V138.8H881V139.2H881.5V139.7H882V138.1H882.5V139.3H883V139H883.5V138.4H884V139.5H884.5V139H885V137.6H885.5V139.3H886V137.2H886.5V139.2H887V138H887.5V138.1H888V138.3H888.5V139.1H889V139.8H889.5V138.7H890V139.4H890.5V140.5H891V137.9H891.5V138.5H892V139.2H892.5V139.9H893V140.4H893.5V137.7H894V139.2H894.5V138.1H895V138H895.5V139.7H896V138.6H896.5V137.2H897V145.8H897.5V137.3H898V138.6H898.5V138.9H899V140.9H899.5V139.6H900V139.1H900.5V144.6H901V137.2H901.5V137.3H902V138H902.5V134.3H903V137.7H903.5V139.9H904V139.4H904.5V135.6H905V142.3H905.5V141.3H906V149.2H906.5V140.4H907V141.6H907.5V143.3H908V141.1H908.5V142.2H909V143.9H909.5V144.9H910V145.3H910.5V144.6H911V145.8H911.5V147.4H912V147H912.5V152.5H913V148.8H913.5V148.4H914V150.6H914.5V150.1H915V150.4H915.5V152.3H916V152.9H916.5V153.8H917V154.4H917.5V154.3H918V155.6H918.5V153.6H919V155.8H919.5V156H920V157.9H920.5V157.9H921V158.8H921.5V159.3H922V159.8H922.5V160.4H923V160.9H923.5V160.5H924V162H924.5V162.3H925V162.9H925.5V163.1H926V163.4H926.5V163.8H927V164.1H927.5V164.4H928V164.7H928.5V165H929V165.3H929.5V165.3H930V165.3H930.5V165.3H931V165.3H931.5V165.3H932V165.3H932.5V165.3H933V165.3H933.5V165.3H934V165.2H934.5V165.3H935V165.3H935.5V165.3H936V165.3H936.5V165.3H937V165.2H937.5V165.3H938V165.3H938.5V165.3H939V165.3H939.5V165.3H940V165.3H940.5V165.3H941V165.3H941.5V165.3H942V165.3H942.5V165.3H943V165.2H943.5V165.3H944V165.3H944.5V165.2H945V165.3H945.5V165.3H946V165.3H946.5V167.2H946V167.1H945.5V167.2H945V167.2H944.5V167.1H944V167.1H943.5V167.2H943V167.1H942.5V167.1H942V167.1H941.5V167.2H941V167.1H940.5V167.1H940V167.3H939.5V167.2H939V167.3H938.5V167.1H938V167.1H937.5V167.2H937V167.3H936.5V167.1H936V167.1H935.5V167.1H935V167.1H934.5V167.2H934V167.1H933.5V167.2H933V167.2H932.5V167.2H932V167.2H931.5V167.3H931V167.2H930.5V167.1H930V167.1H929.5V167.3H929V167.4H928.5V168H928V168.1H927.5V168.5H927V169H926.5V169.5H926V169.7H925.5V170.1H925V170.4H924.5V171.6H924V172H923.5V172.1H923V172.9H922.5V173.5H922V175H921.5V174.1H921V174.7H920.5V176.2H920V176.6H919.5V177.6H919V177.3H918.5V179H918V180.3H917.5V180.2H917V181.6H916.5V182.5H916V184.1H915.5V184.1H915V185.3H914.5V184.2H914V184.7H913.5V185.2H913V185.5H912.5V188.5H912V190.3H911.5V188.4H911V188.9H910.5V192.9H910V191.5H909.5V190.7H909V194H908.5V192.5H908V195.7H907.5V193.9H907V195.2H906.5V192.8H906V198H905.5V196.6H905V197.1H904.5V206.2H904V206.2H903.5V206.2H903V206.2H902.5V206.2H902V206.2H901.5V206.2H901V206.2H900.5V206.2H900V206.2H899.5V206.2H899V206.2H898.5V206.2H898V206.2H897.5V206.2H897V206.2H896.5V206.2H896V206.2H895.5V206.2H895V206.2H894.5V206.2H894V206.2H893.5V206.2H893V206.2H892.5V206.2H892V206.2H891.5V206.2H891V206.2H890.5V206.2H890V206.2H889.5V206.2H889V206.2H888.5V206.2H888V206.2H887.5V206.2H887V206.2H886.5V206.2H886V206.2H885.5V206.2H885V206.2H884.5V206.2H884V206.2H883.5V206.2H883V206.2H882.5V206.2H882V206.2H881.5V206.2H881V206.2H880.5V206.2H880V206.2H879.5V206.2H879V206.2H878.5V206.2H878V206.2H877.5V206.2H877V206.2H876.5V206.2H876V206.2H875.5V206.2H875V206.2H874.5V206.2H874V206.2H873.5V206.2H873V206.2H872.5V206.2H872V206.2H871.5V206.2H871V206.2H870.5V206.2H870V206.2H869.5V206.2H869V206.2H868.5V206.2H868V206.2H867.5V206.2H867V206.2H866.5V206.2H866V206.2H865.5V206.2H865V206.2H864.5V206.2H864V206.2H863.5V206.2H863V206.2H862.5V206.2H862V206.2H861.5V206.2H861V206.2H860.5V206.2H860V206.2H859.5V206.2H859V206.2H858.5V206.2H858V206.2H857.5V206.2H857V206.2H856.5V206.2H856V206.2H855.5V206.2H855V206.2H854.5V206.2H854V206.2H853.5V206.2H853V206.2H852.5V206.2H852V206.2H851.5V206.2H851V206.2H850.5V206.2H850V206.2H849.5V206.2H849V206.2H848.5V206.2H848V206.2H847.5V206.2H847V206.2H846.5V206.2H846V206.2H845.5V206.2H845V206.2H844.5V206.2H844V206.2H843.5V206.2H843V206.2H842.5V206.2H842V206.2H841.5V206.2H841V206.2H840.5V206.2H840V206.2H839.5V206.2H839V206.2H838.5V206.2H838V206.2H837.5V206.2H837V206.2H836.5V206.2H836V206.2H835.5V206.2H835V206.2H834.5V206.2H834V206.2H833.5V206.2H833V206.2H832.5V206.2H832V206.2H831.5V206.2H831V206.2H830.5V206.2H830V206.2H829.5V206.2H829V206.2H828.5V206.2H828V206.2H827.5V206.2H827V206.2H826.5V206.2H826V206.2H825.5V206.2H825V206.2H824.5V206.2H824V206.2H823.5V206.2H823V206.2H822.5V206.2H822V206.2H821.5V206.2H821V206.2H820.5V206.2H820V206.2H819.5V206.2H819V206.2H818.5V206.2H818V206.2H817.5V206.2H817V206.2H816.5V206.2H816V206.2H815.5V206.2H815V206.2H814.5V206.2H814V206.2H813.5V206.2H813V206.2H812.5V206.2H812V206.2H811.5V206.2H811V206.2H810.5V206.2H810V206.2H809.5V206.2H809V206.2H808.5V206.2H808V206.2H807.5V206.2H807V206.2H806.5V206.2H806V206.2H805.5V206.2H805V206.2H804.5V206.2H804V206.2H803.5V206.2H803V206.2H802.5V206.2H802V206.2H801.5V206.2H801V206.2H800.5V206.2H800V206.2H799.5V206.2H799V206.2H798.5V206.2H798V206.2H797.5V206.2H797V206.2H796.5V206.2H796V206.2H795.5V206.2H795V206.2H794.5V206.2H794V206.2H793.5V206.2H793V206.2H792.5V206.2H792V206.2H791.5V206.2H791V206.2H790.5V206.2H790V206.2H789.5V206.2H789V206.2H788.5V206.2H788V206.2H787.5V206.2H787V206.2H786.5V206.2H786V206.2H785.5V206.2H785V206.2H784.5V206.2H784V206.2H783.5V206.2H783V206.2H782.5V206.2H782V206.2H781.5V206.2H781V206.2H780.5V206.2H780V206.2H779.5V206.2H779V206.2H778.5V206.2H778V206.2H777.5V206.2H777V206.2H776.5V206.2H776V206.2H775.5V206.2H775V206.2H774.5V206.2H774V206.2H773.5V206.2H773V206.2H772.5V206.2H772V206.2H771.5V206.2H771V206.2H770.5V206.2H770V206.2H769.5V206.2H769V206.2H768.5V206.2H768V206.2H767.5V206.2H767V206.2H766.5V206.2H766V206.2H765.5V206.2H765V206.2H764.5V206.2H764V206.2H763.5V206.2H763V206.2H762.5V206.2H762V206.2H761.5V206.2H761V206.2H760.5V206.2H760V206.2H759.5V206.2H759V206.2H758.5V206.2H758V206.2H757.5V206.2H757V206.2H756.5V206.2H756V206.2H755.5V206.2H755V206.2H754.5V206.2H754V206.2H753.5V206.2H753V206.2H752.5V206.2H752V206.2H751.5V206.2H751V206.2H750.5V206.2H750V206.2H749.5V206.2H749V206.2H748.5V206.2H748V206.2H747.5V206.2H747V206.2H746.5V206.2H746V206.2H745.5V206.2H745V206.2H744.5V206.2H744V206.2H743.5V206.2H743V206.2H742.5V206.2H742V206.2H741.5V206.2H741V206.2H740.5V206.2H740V206.2H739.5V206.2H739V206.2H738.5V206.2H738V206.2H737.5V206.2H737V206.2H736.5V206.2H736V206.2H735.5V206.2H735V206.2H734.5V206.2H734V206.2H733.5V206.2H733V206.2H732.5V206.2H732V206.2H731.5V206.2H731V206.2H730.5V206.2H730V206.2H729.5V206.2H729V206.2H728.5V206.2H728V206.2H727.5V206.2H727V206.2H726.5V206.2H726V206.2H725.5V206.2H725V206.2H724.5V206.2H724V206.2H723.5V206.2H723V206.2H722.5V206.2H722V206.2H721.5V206.2H721V206.2H720.5V206.2H720V206.2H719.5V206.2H719V206.2H718.5V206.2H718V206.2H717.5V206.2H717V206.2H716.5V206.2H716V206.2H715.5V206.2H715V206.2H714.5V206.2H714V206.2H713.5V206.2H713V206.2H712.5V206.2H712V206.2H711.5V206.2H711V206.2H710.5V206.2H710V206.2H709.5V206.2H709V206.2H708.5V206.2H708V206.2H707.5V206.2H707V206.2H706.5V206.2H706V206.2H705.5V206.2H705V206.2H704.5V206.2H704V206.2H703.5V206.2H703V206.2H702.5V206.2H702V206.2H701.5V206.2H701V206.2H700.5V206.2H700V206.2H699.5V206.2H699V206.2H698.5V206.2H698V206.2H697.5V206.2H697V206.2H696.5V206.2H696V206.2H695.5V206.2H695V206.2H694.5V206.2H694V206.2H693.5V206.2H693V206.2H692.5V206.2H692V206.2H691.5V206.2H691V206.2H690.5V206.2H690V206.2H689.5V206.2H689V206.2H688.5V206.2H688V206.2H687.5V206.2H687V206.2H686.5V206.2H686V206.2H685.5V206.2H685V206.2H684.5V206.2H684V206.2H683.5V206.2H683V206.2H682.5V206.2H682V206.2H681.5V206.2H681V206.2H680.5V206.2H680V206.2H679.5V206.2H679V206.2H678.5V206.2H678V206.2H677.5V206.2H677V206.2H676.5V206.2H676V206.2H675.5V206.2H675V206.2H674.5V206.2H674V206.2H673.5V206.2H673V206.2H672.5V206.2H672V206.2H671.5V206.2H671V206.2H670.5V206.2H670V206.2H669.5V206.2H669V206.2H668.5V206.2H668V206.2H667.5V206.2H667V206.2H666.5V206.2H666V206.2H665.5V206.2H665V206.2H664.5V206.2H664V206.2H663.5V206.2H663V206.2H662.5V206.2H662V206.2H661.5V206.2H661V206.2H660.5V206.2H660V206.2H659.5V206.2H659V206.2H658.5V206.2H658V206.2H657.5V206.2H657V206.2H656.5V206.2H656V206.2H655.5V206.2H655V206.2H654.5V206.2H654V206.2H653.5V206.2H653V206.2H652.5V206.2H652V206.2H651.5V206.2H651V206.2H650.5V206.2H650V206.2H649.5V206.2H649V206.2H648.5V206.2H648V206.2H647.5V206.2H647V206.2H646.5V206.2H646V206.2H645.5V206.2H645V206.2H644.5V206.2H644V206.2H643.5V206.2H643V206.2H642.5V206.2H642V206.2H641.5V206.2H641V206.2H640.5V206.2H640V206.2H639.5V206.2H639V206.2H638.5V206.2H638V206.2H637.5V206.2H637V206.2H636.5V206.2H636V206.2H635.5V206.2H635V206.2H634.5V206.2H634V206.2H633.5V206.2H633V206.2H632.5V206.2H632V206.2H631.5V206.2H631V206.2H630.5V206.2H630V206.2H629.5V206.2H629V206.2H628.5V206.2H628V206.2H627.5V206.2H627V206.2H626.5V206.2H626V206.2H625.5V206.2H625V206.2H624.5V206.2H624V206.2H623.5V206.2H623V206.2H622.5V206.2H622V206.2H621.5V206.2H621V206.2H620.5V206.2H620V206.2H619.5V206.2H619V206.2H618.5V206.2H618V206.2H617.5V206.2H617V206.2H616.5V206.2H616V206.2H615.5V206.2H615V206.2H614.5V206.2H614V206.2H613.5V206.2H613V206.2H612.5V206.2H612V206.2H611.5V206.2H611V206.2H610.5V206.2H610V206.2H609.5V206.2H609V206.2H608.5V206.2H608V206.2H607.5V206.2H607V206.2H606.5V206.2H606V206.2H605.5V206.2H605V206.2H604.5V206.2H604V206.2H603.5V206.2H603V206.2H602.5V206.2H602V206.2H601.5V206.2H601V206.2H600.5V206.2H600V206.2H599.5V206.2H599V206.2H598.5V206.2H598V206.2H597.5V206.2H597V206.2H596.5V206.2H596V206.2H595.5V206.2H595V206.2H594.5V206.2H594V206.2H593.5V206.2H593V206.2H592.5V206.2H592V206.2H591.5V206.2H591V206.2H590.5V206.2H590V206.2H589.5V206.2H589V206.2H588.5V206.2H588V206.2H587.5V206.2H587V206.2H586.5V206.2H586V206.2H585.5V206.2H585V206.2H584.5V206.2H584V206.2H583.5V206.2H583V206.2H582.5V206.2H582V206.2H581.5V206.2H581V206.2H580.5V206.2H580V206.2H579.5V206.2H579V206.2H578.5V206.2H578V206.2H577.5V206.2H577V206.2H576.5V206.2H576V206.2H575.5V206.2H575V206.2H574.5V206.2H574V206.2H573.5V206.2H573V206.2H572.5V206.2H572V206.2H571.5V206.2H571V206.2H570.5V206.2H570V206.2H569.5V206.2H569V206.2H568.5V206.2H568V206.2H567.5V206.2H567V206.2H566.5V206.2H566V206.2H565.5V206.2H565V206.2H564.5V206.2H564V206.2H563.5V206.2H563V206.2H562.5V206.2H562V206.2H561.5V206.2H561V206.2H560.5V206.2H560V206.2H559.5V206.2H559V206.2H558.5V206.2H558V206.2H557.5V206.2H557V206.2H556.5V206.2H556V206.2H555.5V206.2H555V206.2H554.5V206.2H554V206.2H553.5V206.2H553V206.2H552.5V206.2H552V206.2H551.5V206.2H551V206.2H550.5V206.2H550V206.2H549.5V206.2H549V206.2H548.5V206.2H548V206.2H547.5V206.2H547V206.2H546.5V206.2H546V206.2H545.5V206.2H545V206.2H544.5V206.2H544V206.2H543.5V206.2H543V206.2H542.5V206.2H542V206.2H541.5V206.2H541V206.2H540.5V206.2H540V206.2H539.5V206.2H539V206.2H538.5V206.2H538V206.2H537.5V206.2H537V206.2H536.5V206.2H536V206.2H535.5V206.2H535V206.2H534.5V206.2H534V206.2H533.5V206.2H533V206.2H532.5V206.2H532V206.2H531.5V206.2H531V206.2H530.5V206.2H530V206.2H529.5V206.2H529V206.2H528.5V206.2H528V206.2H527.5V206.2H527V206.2H526.5V206.2H526V206.2H525.5V206.2H525V206.2H524.5V206.2H524V206.2H523.5V206.2H523V206.2H522.5V206.2H522V206.2H521.5V206.2H521V206.2H520.5V206.2H520V206.2H519.5V206.2H519V206.2H518.5V206.2H518V206.2H517.5V206.2H517V206.2H516.5V206.2H516V206.2H515.5V206.2H515V206.2H514.5V206.2H514V206.2H513.5V206.2H513V206.2H512.5V206.2H512V206.2H511.5V206.2H511V206.2H510.5V206.2H510V206.2H509.5V206.2H509V206.2H508.5V206.2H508V206.2H507.5V206.2H507V206.2H506.5V206.2H506V206.2H505.5V206.2H505V206.2H504.5V206.2H504V206.2H503.5V206.2H503V206.2H502.5V206.2H502V206.2H501.5V206.2H501V206.2H500.5V206.2H500V206.2H499.5V206.2H499V206.2H498.5V206.2H498V206.2H497.5V206.2H497V206.2H496.5V206.2H496V206.2H495.5V206.2H495V206.2H494.5V206.2H494V206.2H493.5V206.2H493V206.2H492.5V206.2H492V206.2H491.5V206.2H491V206.2H490.5V206.2H490V206.2H489.5V206.2H489V206.2H488.5V206.2H488V206.2H487.5V206.2H487V206.2H486.5V206.2H486V206.2H485.5V206.2H485V206.2H484.5V206.2H484V206.2H483.5V206.2H483V206.2H482.5V206.2H482V206.2H481.5V206.2H481V206.2H480.5V206.2H480V206.2H479.5V206.2H479V206.2H478.5V206.2H478V206.2H477.5V206.2H477V206.2H476.5V206.2H476V206.2H475.5V206.2H475V206.2H474.5V206.2H474V206.2H473.5V206.2H473V206.2H472.5V206.2H472V206.2H471.5V206.2H471V206.2H470.5V206.2H470V206.2H469.5V206.2H469V206.2H468.5V206.2H468V206.2H467.5V206.2H467V206.2H466.5V206.2H466V206.2H465.5V206.2H465V206.2H464.5V206.2H464V206.2H463.5V206.2H463V206.2H462.5V206.2H462V206.2H461.5V206.2H461V206.2H460.5V206.2H460V206.2H459.5V206.2H459V206.2H458.5V206.2H458V206.2H457.5V206.2H457V206.2H456.5V206.2H456V206.2H455.5V206.2H455V206.2H454.5V206.2H454V206.2H453.5V206.2H453V206.2H452.5V206.2H452V206.2H451.5V206.2H451V206.2H450.5V206.2H450V206.2H449.5V206.2H449V206.2H448.5V206.2H448V206.2H447.5V206.2H447V206.2H446.5V206.2H446V206.2H445.5V206.2H445V206.2H444.5V206.2H444V206.2H443.5V206.2H443V206.2H442.5V206.2H442V206.2H441.5V206.2H441V206.2H440.5V206.2H440V206.2H439.5V206.2H439V206.2H438.5V206.2H438V206.2H437.5V206.2H437V206.2H436.5V206.2H436V206.2H435.5V206.2H435V206.2H434.5V206.2H434V206.2H433.5V206.2H433V206.2H432.5V206.2H432V206.2H431.5V206.2H431V206.2H430.5V206.2H430V206.2H429.5V206.2H429V206.2H428.5V206.2H428V206.2H427.5V206.2H427V206.2H426.5V206.2H426V206.2H425.5V206.2H425V206.2H424.5V206.2H424V206.2H423.5V206.2H423V206.2H422.5V206.2H422V206.2H421.5V206.2H421V206.2H420.5V206.2H420V206.2H419.5V206.2H419V206.2H418.5V206.2H418V206.2H417.5V206.2H417V206.2H416.5V206.2H416V206.2H415.5V206.2H415V206.2H414.5V206.2H414V206.2H413.5V206.2H413V206.2H412.5V206.2H412V206.2H411.5V206.2H411V206.2H410.5V206.2H410V206.2H409.5V206.2H409V206.2H408.5V206.2H408V206.2H407.5V206.2H407V206.2H406.5V206.2H406V206.2H405.5V206.2H405V206.2H404.5V206.2H404V206.2H403.5V206.2H403V206.2H402.5V206.2H402V206.2H401.5V206.2H401V206.2H400.5V206.2H400V206.2H399.5V206.2H399V206.2H398.5V206.2H398V206.2H397.5V206.2H397V206.2H396.5V206.2H396V206.2H395.5V206.2H395V206.2H394.5V206.2H394V206.2H393.5V206.2H393V206.2H392.5V206.2H392V206.2H391.5V206.2H391V206.2H390.5V206.2H390V206.2H389.5V206.2H389V206.2H388.5V206.2H388V206.2H387.5V206.2H387V206.2H386.5V206.2H386V206.2H385.5V206.2H385V206.2H384.5V206.2H384V206.2H383.5V206.2H383V206.2H382.5V206.2H382V206.2H381.5V206.2H381V206.2H380.5V206.2H380V206.2H379.5V206.2H379V206.2H378.5V206.2H378V206.2H377.5V206.2H377V206.2H376.5V206.2H376V206.2H375.5V206.2H375V206.2H374.5V206.2H374V206.2H373.5V206.2H373V206.2H372.5V206.2H372V206.2H371.5V206.2H371V206.2H370.5V206.2H370V206.2H369.5V206.2H369V206.2H368.5V206.2H368V206.2H367.5V206.2H367V206.2H366.5V206.2H366V206.2H365.5V206.2H365V206.2H364.5V206.2H364V206.2H363.5V206.2H363V206.2H362.5V206.2H362V206.2H361.5V206.2H361V206.2H360.5V206.2H360V206.2H359.5V206.2H359V206.2H358.5V206.2H358V206.2H357.5V206.2H357V206.2H356.5V206.2H356V206.2H355.5V206.2H355V206.2H354.5V206.2H354V206.2H353.5V206.2H353V206.2H352.5V206.2H352V206.2H351.5V206.2H351V206.2H350.5V206.2H350V206.2H349.5V206.2H349V206.2H348.5V206.2H348V206.2H347.5V206.2H347V206.2H346.5V206.2H346V206.2H345.5V206.2H345V206.2H344.5V206.2H344V206.2H343.5V206.2H343V206.2H342.5V206.2H342V206.2H341.5V206.2H341V206.2H340.5V206.2H340V206.2H339.5V206.2H339V206.2H338.5V206.2H338V206.2H337.5V206.2H337V206.2H336.5V206.2H336V206.2H335.5V206.2H335V206.2H334.5V206.2H334V206.2H333.5V206.2H333V206.2H332.5V206.2H332V206.2H331.5V206.2H331V206.2H330.5V206.2H330V206.2H329.5V206.2H329V206.2H328.5V206.2H328V206.2H327.5V206.2H327V206.2H326.5V206.2H326V206.2H325.5V206.2H325V206.2H324.5V206.2H324V206.2H323.5V206.2H323V206.2H322.5V206.2H322V206.2H321.5V206.2H321V206.2H320.5V206.2H320V206.2H319.5V206.2H319V206.2H318.5V206.2H318V206.2H317.5V206.2H317V206.2H316.5V206.2H316V206.2H315.5V206.2H315V206.2H314.5V206.2H314V206.2H313.5V206.2H313V206.2H312.5V206.2H312V206.2H311.5V206.2H311V206.2H310.5V206.2H310V206.2H309.5V206.2H309V206.2H308.5V206.2H308V206.2H307.5V206.2H307V206.2H306.5V206.2H306V206.2H305.5V206.2H305V206.2H304.5V206.2H304V206.2H303.5V206.2H303V206.2H302.5V206.2H302V206.2H301.5V206.2H301V206.2H300.5V206.2H300V194.7H299.5V197.7H299Z" fill="#808080"/><path d="M301.9,199V194.2M302.8,199V195.1M304.3,199V196.5M306.4,199V193.8M309.3,199V195.9M311.7,199V193.2M314.5,199V196.4M315.9,199V189M318.2,199V194.4M319.9,199V188.1M321,199V187.2M323.7,199V193.7M326.6,199V189.9M329.3,199V185.7M331.6,199V194.8M333.3,199V195.6M335.8,199V196.1M337.2,199V194.1M338.4,199V191.6M341.4,199V195.4M343.7,199V194.5M344.9,199V194.1M345.8,199V196.6M347.3,199V193.1M349.5,199V196M350.8,199V192.1M353.5,199V191.5M355,199V195M357.4,199V192.5M358.5,199V186.8M359.8,199V195.3M360.7,199V195.6M363.1,199V191.6M366,199V196.5M366.9,199V191.7M369.2,199V190.5M370.8,199V195.7M371.7,199V196.5M372.8,199V196.2M373.9,199V190.1M375.5,199V195.5M377.9,199V190.2M379.9,199V189M382.9,199V193.7M385.1,199V196.5M386.9,199V194.5M388.8,199V196.2M389.9,199V191.2M392.9,199V193.6M394.7,199V191.3M396.4,199V190.8M398.1,199V194.4M401.1,199V196.4M402,199V195.3M403.2,199V193.3M405.6,199V194.9M407.2,199V194.1M408.1,199V191M409.2,199V195M411.6,199V196M412.9,199V193.1M413.8,199V192.5M414.9,199V195.5M415.8,199V192.6M418.6,199V194.5M419.5,199V192.9M420.9,199V194.1M423.1,199V195.7M426,199V194M428.4,199V187.3M429.3,199V195.7M431.3,199V185.9M432.7,199V194.3M433.8,199V189.3M435.4,199V192.8M437.8,199V195.9M438.8,199V194.8M440.7,199V193.5M442.3,199V194.4M444.4,199V195.4M446.5,199V190.5M448.7,199V185.6M450.4,199V193.4M452.1,199V193.5M453.7,199V192.7M456.2,199V189.2M457.9,199V194.5M459.4,199V195.6M462.2,199V195.1M463.2,199V195.4M466,199V196.3M468.5,199V194M470,199V195.4M471.5,199V195.1M473.9,199V196.3M476.5,199V195.8M477.5,199V195.8M479.6,199V196.5M481.8,199V196.5M483.5,199V192.1M485.1,199V186.2M487.1,199V195.3M488.1,199V195.9M489.1,199V195.8M492.1,199V189.9M495,199V190.2M496.9,199V189.8M498,199V193.8M500,199V190.2M502,199V188.1M503,199V196.5M504.2,199V192.7M505.9,199V193.2M507.3,199V193.2M510,199V196.6M512,199V195.5M513,199V193.9M515.1,199V193M517,199V195.4M518.4,199V195.7M519.5,199V195.2M521.6,199V196.6M524.2,199V195.8M526.8,199V194.3M529.3,199V186.6M530.5,199V196.3M531.8,199V186M533.7,199V196M535,199V190.5M537.5,199V194M539.4,199V194.4M541.7,199V193.6M543.7,199V196.5M545.4,199V196.4M546.3,199V191.4M549,199V196.5M550.6,199V196M552.7,199V192.4M553.9,199V196.6M556.4,199V194.4M558.9,199V196.4M560.4,199V189.2M561.9,199V194.5M563.7,199V193.9M566.3,199V189.4M569.2,199V194.5M572.2,199V194.5M573.2,199V194.9M575.9,199V194.8M578.7,199V190.9M579.6,199V195.5M581.3,199V189.3M583.9,199V196.4M586.3,199V195.6M587.2,199V196.3M589.2,199V193.7M590.7,199V196.5M592.2,199V194.2M593.6,199V196.4M595.1,199V196.6M596.9,199V196.4M598.5,199V193.6M599.4,199V195.6M601.4,199V194.4M603.9,199V191.4M606.5,199V188.2M608.8,199V193.4M610.8,199V191M613.5,199V196.1M615.7,199V189.5M616.6,199V194.3M619.5,199V195.4M620.6,199V191.8M623,199V193.1M623.8,199V194.5M626.6,199V193.8M627.6,199V189.9M628.5,199V190.2M629.4,199V194.5M630.4,199V185.8M631.5,199V195M633.7,199V196.1M635.4,199V193.9M637.6,199V185.2M640.3,199V194.1M641.7,199V192.8M643.8,199V192.1M645.3,199V196.6M646.6,199V188.6M647.5,199V195.9M650,199V193.5M651,199V184.4M653.4,199V192M655.9,199V194.8M657.8,199V193.8M660,199V194.7M661.3,199V193.8M664.2,199V186.5M666.9,199V190.6M667.8,199V188.6M670.5,199V196.6M672.9,199V190.9M675.9,199V192.7M678.1,199V193.3M680.3,199V195.8M682.7,199V191.8M684,199V192.6M686,199V196.6M687.7,199V195.9M688.9,199V192.8M691.7,199V196.4M694.5,199V190.8M696.6,199V195M697.6,199V196.1M699.9,199V188.7M702,199V186.5M704.6,199V190.7M705.4,199V191.5M708.1,199V193.7M708.9,199V189.9M711.9,199V190M714.4,199V190.6M717.2,199V196.5M718.7,199V192.1M720.4,199V194.1M721.4,199V195M722.4,199V193.3M725,199V192.3M726.2,199V195M727.1,199V193.1M728.5,199V193.3M729.9,199V196.1M731.5,199V193.6M734,199V191.2M736.7,199V196.1M737.7,199V188.4M740.7,199V195M742.8,199V191.7M743.9,199V190.2M745.3,199V191.7M746.2,199V194.3M747.5,199V194.2M749,199V188.8M752,199V186M753.3,199V195.6M755.4,199V196.5M758.3,199V195.4M760.3,199V196.6M761.2,199V187.2M763.1,199V196.4M765.4,199V196.3M768.3,199V195.6M770.6,199V193.6M773.1,199V193.5M775.1,199V195.6M777.9,199V193.1M779.5,199V196.6M782.4,199V187M784.5,199V196.5M785.4,199V191.6M788.3,199V195.7M789.6,199V196.5M791.5,199V194.6M794.4,199V193.2M796.3,199V196.6M798.5,199V196M800.8,199V194.5M803.4,199V194.3M804.6,199V185.1M807.4,199V196.2M809,199V195.8M810.5,199V196.1M812.1,199V196.2M813.3,199V193.1M815.6,199V195.9M816.5,199V192M817.9,199V194M819.5,199V196.6M821.5,199V191.6M824.4,199V194.6M825.7,199V194.8M827.7,199V195.8M829.4,199V196.5M832.3,199V186.9M833.9,199V194.4M836.3,199V194M837.1,199V196.5M839.7,199V192.8M840.7,199V195.5M841.8,199V191.6M844.4,199V195.1M845.9,199V195.7M846.7,199V188.9M849.3,199V190.8M851.9,199V187.9M853.2,199V196.3M855.7,199V190.5M857.1,199V191.7M860.1,199V187.9M862.9,199V194.4M863.8,199V188.2M865.8,199V195.5M866.7,199V196.1M868.4,199V188.7M871.1,199V194M872,199V190.8M873.7,199V195.7M874.6,199V196.5M876.4,199V195.1M878.5,199V190.4M879.7,199V193.6M881.8,199V191.3M882.7,199V195.5M885.3,199V189.3M886.7,199V196.3M888.4,199V194.1M889.6,199V196.6M892.2,199V194.9M893.1,199V194.8M895.2,199V187.7M896.6,199V194.3M899.1,199V193.7M901.4,199V192.6M904.3,199V194.7M906.5,199V196.1" stroke="#3c3c3c" stroke-opacity="0.5" stroke-width="0.8" fill="none"/></svg>
<div class="cl">Call Me</div>
<div class="cb" style="box-shadow:inset 0 0 0 1.8px #7c7c7c"></div>
</div>
<div class="clip" style="top:202.4px;background:#2b454e">
<svg width="649" height="80" viewBox="298 202.4 649 80" preserveAspectRatio="none"><path d="M299,241.1H300V241.1H301V241.1H302V241.1H303V241.1H304V241.1H305V241.1H306V241.1H307V241.1H308V241.1H309V241.1H310V241.1H311V241.1H312V241.1H313V241.1H314V241.1H315V241.1H316V241.1H317V241.1H318V241.1H319V241.1H320V241.1H321V241.1H322V241.1H323V241.1H324V241.1H325V241.1H326V241.1H327V241.1H328V241.1H329V241.1H330V241.1H331V241.1H332V241.1H333V241.1H334V241.1H335V241.1H336V241.1H337V241.1H338V241.1H339V241.1H340V241.1H341V241.1H342V241.1H343V241.1H344V241.1H345V231.3H346V230.7H347V230.5H348V227.5H349V230.2H350V228.6H351V231H352V228.9H353V230.8H354V235.6H355V232.7H356V229.9H357V233.4H358V234H359V231.4H360V229.6H361V229.9H362V235.5H363V235.7H364V238.1H365V240.4H366V234.9H367V233.1H368V231.8H369V230.3H370V230.8H371V228.8H372V232.3H373V227.2H374V233.1H375V231.9H376V231.6H377V232.8H378V231.3H379V232.8H380V232.3H381V230.7H382V231.1H383V230.2H384V235.3H385V241.1H386V240.6H387V236.8H388V231.2H389V233H390V230.9H391V228.7H392V229.5H393V226H394V229.4H395V227.8H396V230.8H397V229H398V229.2H399V230.7H400V230.8H401V235.1H402V229.8H403V230.1H404V230.4H405V225.1H406V229.2H407V227.3H408V227.8H409V228.9H410V229.3H411V227.9H412V229.5H413V228.5H414V230.6H415V229.9H416V229.4H417V228.9H418V229.9H419V228.8H420V230.1H421V228.6H422V228.4H423V229.9H424V231H425V228.9H426V229.4H427V229.2H428V232.9H429V229.8H430V228.6H431V228.6H432V225.8H433V230.3H434V229.3H435V227.3H436V227.3H437V235.1H438V230.9H439V230.6H440V235.6H441V231.5H442V231.8H443V231H444V228.4H445V230.8H446V228.9H447V230.3H448V230.1H449V231.9H450V231.2H451V230.6H452V237.3H453V241.1H454V241.1H455V241.1H456V241.1H457V241.1H458V241.1H459V241.1H460V241.1H461V241.1H462V241.1H463V241.1H464V241.1H465V241.1H466V241.1H467V241.1H468V241.1H469V234.6H470V226.6H471V232.2H472V230.3H473V231.9H474V228.8H475V229.8H476V233.6H477V231.1H478V230.9H479V235.3H480V231.6H481V233.7H482V229.7H483V231.1H484V235.5H485V232H486V231.4H487V230.9H488V232H489V236.3H490V235.9H491V233.5H492V229.4H493V231.4H494V232.1H495V230H496V227H497V229.5H498V230.2H499V230.4H500V229.1H501V232.5H502V226.7H503V231.1H504V229.5H505V233.8H506V231.4H507V233.2H508V233.5H509V236.3H510V227.7H511V228.6H512V226.6H513V228.1H514V230.6H515V234.3H516V230H517V234.7H518V227.7H519V226.1H520V231.2H521V230.6H522V230H523V230.2H524V227.3H525V229.6H526V229.4H527V230.2H528V230.1H529V229.2H530V226H531V229.9H532V228.2H533V225.9H534V225.1H535V227.9H536V226.6H537V224.7H538V230.9H539V230.1H540V227.3H541V225.5H542V232.3H543V229.8H544V226H545V230.3H546V230H547V229.7H548V230.1H549V227.2H550V226.3H551V231H552V228.3H553V229.6H554V230.5H555V233.2H556V228.1H557V233.7H558V233.9H559V231H560V230H561V229.2H562V229.9H563V231H564V230.6H565V229.5H566V235H567V233.9H568V230.8H569V230.6H570V233.1H571V233.3H572V230.4H573V229.6H574V227.2H575V232.2H576V229.9H577V231.8H578V227.8H579V230.6H580V230.1H581V237.6H582V241.1H583V241.1H584V241.1H585V241.1H586V241.1H587V241.1H588V241.1H589V241.1H590V241.1H591V241.1H592V241.1H593V241.1H594V241.1H595V241.1H596V241.1H597V241.1H598V237.5H599V226.6H600V234H601V231.3H602V231H603V228.2H604V228.1H605V232.8H606V229.6H607V229.8H608V229.3H609V230.9H610V231.8H611V228.7H612V229.5H613V231.2H614V227.6H615V229.3H616V232H617V227.4H618V232.1H619V232.4H620V239.4H621V239.3H622V229.9H623V229.2H624V228.8H625V229.5H626V233.8H627V227.7H628V234.1H629V226.9H630V228.3H631V229.7H632V230.6H633V234.5H634V237.3H635V236.2H636V232.1H637V237.1H638V236.7H639V230.3H640V227H641V231.2H642V230.3H643V231H644V230.8H645V228.2H646V229H647V230.8H648V230.9H649V234.7H650V230.8H651V231H652V230.8H653V230.5H654V232.4H655V239.6H656V239.4H657V229H658V229.8H659V234.4H660V229.6H661V229.7H662V231.7H663V230H664V234H665V227.4H666V229.9H667V229.2H668V229.6H669V230.4H670V230.3H671V233.1H672V235.5H673V239.5H674V240.3H675V238.8H676V237.1H677V237.7H678V231.6H679V230.7H680V230.5H681V230.7H682V232.7H683V233.5H684V231.5H685V231.2H686V229.4H687V230.4H688V231.9H689V230.9H690V232.6H691V234.1H692V235.2H693V238.6H694V241.1H695V241.1H696V241.1H697V241.1H698V241.1H699V241.1H700V241.1H701V241.1H702V241.1H703V241.1H704V241.1H705V241.1H706V241.1H707V241.1H708V241.1H709V241.1H710V241.1H711V241.1H712V241.1H713V241.1H714V241.1H715V241.1H716V241.1H717V241.1H718V241.1H719V241.1H720V241.1H721V241.1H722V241.1H723V241.1H724V241.1H725V241.1H726V241.1H727V241.1H728V241.1H729V241.1H730V241.1H731V241.1H732V241.1H733V241.1H734V241.1H735V241.1H736V241.1H737V241.1H738V241.1H739V241.1H740V241.1H741V241.1H742V241.1H743V241.1H744V241.1H745V241.1H746V241.1H747V241.1H748V241.1H749V241.1H750V241.1H751V241.1H752V241.1H753V241.1H754V241.1H755V241.1H756V241.1H757V241.1H758V241.1H759V241.1H760V241.1H761V241.1H762V241.1H763V241.1H764V241.1H765V241.1H766V241.1H767V241.1H768V241.1H769V241.1H770V241.1H771V241.1H772V241.1H773V241.1H774V241.1H775V241.1H776V241.1H777V241.1H778V241.1H779V241.1H780V241.1H781V241.1H782V241.1H783V241.1H784V241.1H785V241.1H786V241.1H787V241.1H788V241.1H789V241.1H790V241.1H791V241.1H792V241.1H793V241.1H794V241.1H795V241.1H796V241.1H797V241.1H798V241.1H799V233.3H800V233.8H801V229.8H802V230.9H803V230.4H804V230.9H805V232H806V234.7H807V230H808V233.4H809V230.1H810V231.9H811V230H812V231.5H813V231.2H814V232.7H815V231.8H816V235.8H817V238.1H818V234.6H819V226.5H820V226.6H821V226.6H822V228H823V230.1H824V226.5H825V229.4H826V228.7H827V226H828V230.8H829V230.1H830V229.9H831V228.7H832V226.3H833V233.3H834V228.8H835V229.5H836V231.8H837V228.3H838V230.8H839V230.2H840V230.2H841V231.2H842V233.8H843V230.9H844V230.9H845V229.8H846V231.8H847V233.1H848V236H849V232.3H850V231.8H851V225.5H852V229.7H853V225.2H854V228.8H855V228.4H856V230H857V224.8H858V227.5H859V229.2H860V228.2H861V230.4H862V229.8H863V228.4H864V234.2H865V230.7H866V231.2H867V234.8H868V229H869V231H870V225.7H871V231.2H872V232H873V227H874V233.8H875V231.1H876V228.8H877V231.3H878V227.2H879V230.2H880V228.8H881V234.2H882V229.4H883V226.3H884V227.1H885V229.8H886V231.4H887V231.4H888V230.6H889V227.1H890V229.2H891V230.4H892V229.4H893V229.4H894V231.7H895V232.1H896V230.4H897V231.6H898V232.2H899V231.2H900V229.6H901V233.3H902V233.9H903V231.5H904V234H905V235.6H906V236.1H907V234.2H908V236H909V234.7H910V238.4H911V236.4H912V235.2H913V237.1H914V237.5H915V238.9H916V239.8H917V240.5H918V239.6H919V239H920V239.3H921V238.8H922V239.4H923V240.5H924V240.2H925V240.7H926V241H927V241.1H928V240.9H929V241.1H930V241.1H931V241.1H932V241.1H933V241.1H934V241.1H935V241.1H936V241.1H937V241.1H938V241.1H939V241.1H940V241.1H941V241.1H942V241.1H943V241.1H944V241.1H945V241.1H946V241.1H947V243.3H946V243.3H945V243.3H944V243.3H943V243.3H942V243.3H941V243.3H940V243.3H939V243.3H938V243.3H937V243.3H936V243.3H935V243.3H934V243.3H933V243.3H932V243.3H931V243.3H930V243.3H929V243.3H928V243.3H927V243.5H926V243.7H925V243.5H924V244.1H923V244.4H922V244.7H921V244.4H920V245.1H919V244.5H918V244.8H917V245.2H916V246.3H915V246.5H914V248H913V248.5H912V248.1H911V252H910V250.6H909V250.8H908V251.6H907V251.7H906V252.4H905V251.4H904V255.2H903V248.9H902V252.7H901V255.3H900V253.5H899V255.8H898V254.2H897V253H896V253.4H895V255H894V251.9H893V254.6H892V254.4H891V254.7H890V255.5H889V256.6H888V255.6H887V256.3H886V255.1H885V261H884V257.4H883V256.7H882V255.7H881V257.2H880V256.8H879V259.8H878V252.1H877V256.3H876V257.3H875V257.2H874V253.3H873V256.4H872V256.7H871V255.9H870V257H869V253H868V257.2H867V259.3H866V255.9H865V257H864V255.2H863V261.3H862V257.2H861V257.4H860V261.7H859V258H858V257.5H857V257.4H856V259.2H855V257.6H854V257.2H853V251.1H852V256.8H851V254.4H850V252.3H849V249.8H848V251.8H847V251.9H846V252.7H845V251.8H844V256.6H843V251.5H842V258H841V258.5H840V257.8H839V252.2H838V262.6H837V252.6H836V259.3H835V258.7H834V259.8H833V257.8H832V257.8H831V257.7H830V253.9H829V257H828V260.6H827V254.9H826V253.1H825V256.8H824V263H823V251.9H822V257.9H821V258.5H820V255.5H819V254.9H818V249.3H817V251.3H816V254.9H815V253.5H814V251.3H813V258.3H812V255.9H811V259.6H810V256.4H809V256.9H808V251.6H807V257.4H806V257.1H805V254.5H804V255.3H803V252.9H802V251.4H801V253.7H800V255.3H799V243.3H798V243.3H797V243.3H796V243.3H795V243.3H794V243.3H793V243.3H792V243.3H791V243.3H790V243.3H789V243.3H788V243.3H787V243.3H786V243.3H785V243.3H784V243.3H783V243.3H782V243.3H781V243.3H780V243.3H779V243.3H778V243.3H777V243.3H776V243.3H775V243.3H774V243.3H773V243.3H772V243.3H771V243.3H770V243.3H769V243.3H768V243.3H767V243.3H766V243.3H765V243.3H764V243.3H763V243.3H762V243.3H761V243.3H760V243.3H759V243.3H758V243.3H757V243.3H756V243.3H755V243.3H754V243.3H753V243.3H752V243.3H751V243.3H750V243.3H749V243.3H748V243.3H747V243.3H746V243.3H745V243.3H744V243.3H743V243.3H742V243.3H741V243.3H740V243.3H739V243.3H738V243.3H737V243.3H736V243.3H735V243.3H734V243.3H733V243.3H732V243.3H731V243.3H730V243.3H729V243.3H728V243.3H727V243.3H726V243.3H725V243.3H724V243.3H723V243.3H722V243.3H721V243.3H720V243.3H719V243.3H718V243.3H717V243.3H716V243.3H715V243.3H714V243.3H713V243.3H712V243.3H711V243.3H710V243.3H709V243.3H708V243.3H707V243.3H706V243.3H705V243.3H704V243.3H703V243.3H702V243.3H701V243.3H700V243.3H699V243.3H698V243.3H697V243.3H696V243.3H695V243.3H694V245.9H693V252.5H692V251.9H691V254H690V261.1H689V252.4H688V252.6H687V260.1H686V260.5H685V255.8H684V256.7H683V256.7H682V252.4H681V250.3H680V255.6H679V254.2H678V251.1H677V248.7H676V246.4H675V244.3H674V248.7H673V250.9H672V252.2H671V256.9H670V261.8H669V260.4H668V258.7H667V258.7H666V258.7H665V252H664V261H663V253H662V255.9H661V257.9H660V259.2H659V254H658V254.5H657V245.9H656V246H655V249.7H654V250.6H653V254.6H652V259.4H651V256.4H650V256.1H649V257.7H648V257.4H647V256.7H646V257H645V256.8H644V260.7H643V256.7H642V257H641V255.7H640V254.1H639V249.5H638V251.9H637V258.7H636V249.3H635V249.4H634V257.6H633V257.2H632V256.6H631V259.8H630V253.3H629V257.8H628V257.6H627V257.4H626V257H625V257.1H624V256.8H623V254.6H622V246.3H621V246H620V251.7H619V255.8H618V256.5H617V256.1H616V256.6H615V262.9H614V259H613V260H612V259.9H611V253.9H610V256.7H609V255.5H608V253.4H607V256.7H606V258.1H605V257.3H604V257.8H603V260.9H602V253.1H601V255.3H600V256.8H599V250.9H598V243.3H597V243.3H596V243.3H595V243.3H594V243.3H593V243.3H592V243.3H591V243.3H590V243.3H589V243.3H588V243.3H587V243.3H586V243.3H585V243.3H584V243.3H583V243.3H582V248.5H581V253.4H580V250.5H579V252.2H578V259H577V255.6H576V251H575V258.2H574V257.7H573V257H572V257.8H571V258.8H570V259.3H569V261.1H568V261.9H567V257.1H566V257.6H565V259.8H564V259.3H563V259.9H562V256.8H561V264.2H560V253.4H559V260.5H558V261.2H557V266.2H556V258.8H555V266.2H554V252.6H553V255.9H552V257.3H551V258H550V252.2H549V259H548V257.6H547V259.7H546V258.3H545V257.4H544V255.6H543V258.9H542V259.2H541V258.7H540V257.3H539V259.5H538V266.7H537V262.5H536V259.5H535V261.4H534V258.7H533V257.3H532V257.7H531V256.8H530V258.6H529V259.5H528V259H527V257.1H526V256.7H525V262.2H524V257H523V264.1H522V255.3H521V259.3H520V258.3H519V260.2H518V257.2H517V258.2H516V259.1H515V258.6H514V258.3H513V258.2H512V252.7H511V253.7H510V249.1H509V252.2H508V256H507V259.5H506V262.3H505V256.6H504V252.7H503V257.2H502V252.2H501V257.6H500V258.6H499V256.8H498V259.9H497V256.5H496V256.5H495V257H494V258.8H493V261H492V257.4H491V249.7H490V246.7H489V254.4H488V251.6H487V255.6H486V257H485V256.8H484V256.8H483V250.7H482V255.2H481V256.6H480V263.5H479V252.2H478V252.1H477V258.8H476V258.2H475V256.1H474V259.6H473V257H472V256.2H471V257.4H470V252.5H469V243.3H468V243.3H467V243.3H466V243.3H465V243.3H464V243.3H463V243.3H462V243.3H461V243.3H460V243.3H459V243.3H458V243.3H457V243.3H456V243.3H455V243.3H454V243.3H453V248.6H452V256.8H451V257H450V258H449V258.4H448V256.2H447V257.6H446V256.5H445V258.6H444V255.8H443V257.5H442V252.2H441V258.7H440V251.9H439V262H438V257.3H437V257.8H436V258.5H435V258.5H434V256H433V257.9H432V257.9H431V256.8H430V251.8H429V264.1H428V259.4H427V259.8H426V258.4H425V258.1H424V258.8H423V259H422V251.9H421V259H420V259H419V257.3H418V264.1H417V258H416V256.3H415V259.4H414V256.8H413V257.7H412V259.9H411V259.8H410V259.4H409V261.9H408V261.5H407V259.1H406V257H405V259H404V255.8H403V259.6H402V257.8H401V256.2H400V258.7H399V258.3H398V257.5H397V257.1H396V257.2H395V257.6H394V252.1H393V259.1H392V253.1H391V259.9H390V253.6H389V255.1H388V250.6H387V244H386V244H385V251.3H384V256.8H383V262.1H382V256.8H381V255.9H380V256.8H379V257.5H378V255.3H377V258.1H376V255.8H375V256.9H374V255.5H373V259.8H372V256.5H371V261.2H370V258.6H369V257.9H368V254.7H367V251.8H366V245.5H365V249.4H364V260.2H363V252.4H362V259.4H361V259.4H360V257.2H359V263.4H358V256.5H357V254.9H356V253.1H355V258.1H354V252H353V258.6H352V257.4H351V258.2H350V253.4H349V255.7H348V256.6H347V260.1H346V254.3H345V243.3H344V243.3H343V243.3H342V243.3H341V243.3H340V243.3H339V243.3H338V243.3H337V243.3H336V243.3H335V243.3H334V243.3H333V243.3H332V243.3H331V243.3H330V243.3H329V243.3H328V243.3H327V243.3H326V243.3H325V243.3H324V243.3H323V243.3H322V243.3H321V243.3H320V243.3H319V243.3H318V243.3H317V243.3H316V243.3H315V243.3H314V243.3H313V243.3H312V243.3H311V243.3H310V243.3H309V243.3H308V243.3H307V243.3H306V243.3H305V243.3H304V243.3H303V243.3H302V243.3H301V243.3H300V243.3H299Z" fill="#e27676"/></svg>
<div class="cl">Vocals</div>
<div class="ct">[Vocals][Local][4.2 (latest)]</div>
<div class="cb" style="box-shadow:inset 0 0 0 2px #40dce6"></div>
</div>
<div class="clip" style="top:285.6px;background:#34404f">
<svg width="649" height="80" viewBox="298 285.6 649 80" preserveAspectRatio="none"><path d="M299,310.8H299.5V308.3H300V306.2H300.5V305.8H301V308.9H301.5V306.6H302V306.3H302.5V307.4H303V305H303.5V306.7H304V305.7H304.5V302.7H305V303.4H305.5V305.8H306V306H306.5V306.3H307V303H307.5V306.3H308V304.9H308.5V305.1H309V305.2H309.5V301.3H310V307.5H310.5V305.9H311V305.9H311.5V305.8H312V301.6H312.5V305.6H313V305.5H313.5V306.1H314V305.5H314.5V306.2H315V307.4H315.5V305.4H316V306.3H316.5V301.3H317V305.2H317.5V304.7H318V305.7H318.5V304.6H319V304.7H319.5V305.7H320V304.7H320.5V307.6H321V305.5H321.5V306.4H322V305.9H322.5V306.1H323V300.8H323.5V304.9H324V305.9H324.5V305.3H325V306.4H325.5V307.5H326V305.2H326.5V305.2H327V305.8H327.5V305.8H328V306.3H328.5V304.4H329V301.4H329.5V305.1H330V305.5H330.5V304.5H331V303H331.5V302.9H332V305H332.5V302.4H333V305.9H333.5V308.5H334V305.2H334.5V300.8H335V304.8H335.5V303.1H336V306H336.5V305.9H337V305.8H337.5V302.5H338V305.8H338.5V305.3H339V306.2H339.5V305.4H340V304.5H340.5V305H341V305.3H341.5V300.6H342V305.8H342.5V306.2H343V301.1H343.5V305.5H344V306.4H344.5V305.6H345V305.7H345.5V306H346V302.7H346.5V304.8H347V305.6H347.5V308.4H348V304.5H348.5V302.1H349V304.7H349.5V305.2H350V305.2H350.5V305.1H351V306H351.5V305.8H352V304.9H352.5V304.5H353V302.6H353.5V306.3H354V306.4H354.5V304.7H355V305.6H355.5V301.5H356V308.1H356.5V306.1H357V305.9H357.5V304.9H358V303H358.5V306H359V304.7H359.5V305.7H360V306H360.5V309H361V309.6H361.5V304.7H362V306.6H362.5V306.6H363V305.2H363.5V306.6H364V306.5H364.5V305.7H365V305.9H365.5V301.3H366V306.6H366.5V308.4H367V307.7H367.5V304.9H368V303.4H368.5V305.2H369V306.3H369.5V302H370V305.8H370.5V306H371V306H371.5V305.5H372V306.6H372.5V301.8H373V309.6H373.5V301.8H374V306.4H374.5V302.2H375V305.4H375.5V305.7H376V303.2H376.5V302.3H377V306.4H377.5V305.8H378V307.8H378.5V305.4H379V307.6H379.5V305H380V306H380.5V304.9H381V306.8H381.5V305.6H382V305.3H382.5V306.4H383V305.7H383.5V306.3H384V305.6H384.5V305.3H385V306H385.5V303.2H386V305.1H386.5V306.5H387V302.1H387.5V303.1H388V302.2H388.5V305.7H389V302.5H389.5V305.1H390V305.4H390.5V305.8H391V305.7H391.5V305.6H392V306.6H392.5V305.5H393V305.1H393.5V304.6H394V305.8H394.5V301.9H395V304.6H395.5V307.8H396V305.6H396.5V301.2H397V305.6H397.5V305.3H398V305.2H398.5V305H399V306H399.5V304.9H400V306.1H400.5V304.7H401V301.7H401.5V302.7H402V305.9H402.5V308.3H403V306.1H403.5V305.8H404V305.7H404.5V309.4H405V305.6H405.5V301.5H406V301.7H406.5V305.4H407V305.7H407.5V305.1H408V305.7H408.5V305.1H409V305.4H409.5V309.4H410V305.5H410.5V308H411V302.8H411.5V305.7H412V305.9H412.5V302.9H413V304.6H413.5V308.1H414V301.1H414.5V308.1H415V301.5H415.5V301.6H416V305.3H416.5V306.3H417V305.7H417.5V305.6H418V306.2H418.5V304.5H419V305.1H419.5V309.2H420V304.7H420.5V305.2H421V307.7H421.5V305.4H422V306.1H422.5V306H423V304.6H423.5V305.9H424V306H424.5V305.3H425V307.2H425.5V304.8H426V305.2H426.5V305.4H427V308.5H427.5V305.8H428V305.3H428.5V308.7H429V305.5H429.5V305.7H430V305.2H430.5V305H431V305.5H431.5V304.4H432V305.1H432.5V304.3H433V305.8H433.5V304.5H434V304.1H434.5V305.6H435V305.4H435.5V304H436V307.6H436.5V305.5H437V304.8H437.5V304.4H438V304.2H438.5V304H439V304.6H439.5V304H440V305.1H440.5V305.4H441V302.5H441.5V301.5H442V305.9H442.5V305.7H443V305.3H443.5V304.5H444V305.1H444.5V305.7H445V304.5H445.5V303.9H446V304.6H446.5V304.4H447V305.6H447.5V303.9H448V304.6H448.5V305.3H449V305.9H449.5V305.5H450V305.4H450.5V302.2H451V304.7H451.5V304.1H452V305.5H452.5V305.7H453V305.2H453.5V305.4H454V304.2H454.5V304.3H455V305.4H455.5V305.3H456V304.1H456.5V305.7H457V304H457.5V304.5H458V305.5H458.5V303.9H459V304H459.5V301.4H460V305.6H460.5V305.7H461V304.4H461.5V302.4H462V304.6H462.5V300H463V304.8H463.5V304.7H464V305H464.5V305.6H465V304.4H465.5V306.8H466V301.9H466.5V305.2H467V305.7H467.5V305.9H468V302.2H468.5V305.4H469V304.6H469.5V304.4H470V305.3H470.5V304.5H471V304.4H471.5V304.1H472V304.6H472.5V304.9H473V305.8H473.5V305.5H474V305.1H474.5V305.5H475V304.2H475.5V304.7H476V300.1H476.5V307.4H477V304.9H477.5V304.4H478V308.1H478.5V304.7H479V304.6H479.5V306H480V305.3H480.5V306.7H481V304.8H481.5V305.1H482V304.2H482.5V301.9H483V305.2H483.5V300.2H484V308.4H484.5V305.6H485V305.7H485.5V304.6H486V305.9H486.5V304.4H487V304.3H487.5V305.8H488V304.4H488.5V306H489V307.8H489.5V305.2H490V304.1H490.5V304.7H491V308.8H491.5V302.7H492V304.8H492.5V304.5H493V306H493.5V305.3H494V304.1H494.5V305.6H495V305.1H495.5V306H496V304.8H496.5V304.6H497V304.5H497.5V304.9H498V301H498.5V305.2H499V304.6H499.5V304.6H500V304.6H500.5V305.5H501V304.3H501.5V307.4H502V305.6H502.5V304.2H503V301.2H503.5V304.3H504V304.6H504.5V305.6H505V307.4H505.5V300.5H506V308H506.5V305.2H507V304.4H507.5V306H508V305.4H508.5V304.3H509V305.4H509.5V308.8H510V309.2H510.5V305H511V305.1H511.5V305.7H512V302.4H512.5V304.4H513V304.6H513.5V305.3H514V305.6H514.5V305.3H515V306.3H515.5V306H516V305.2H516.5V305.7H517V304.9H517.5V305.1H518V305H518.5V302.4H519V306.1H519.5V306H520V300.8H520.5V305.3H521V304.3H521.5V304.9H522V304.7H522.5V305.3H523V305.8H523.5V305H524V305.8H524.5V305.9H525V301.4H525.5V304.4H526V308.2H526.5V304.4H527V303.1H527.5V304.9H528V307.8H528.5V307.3H529V304.5H529.5V302H530V305.7H530.5V305.8H531V305.9H531.5V305.6H532V304.5H532.5V305.2H533V305.1H533.5V304.9H534V305.9H534.5V301.5H535V305.9H535.5V305.3H536V304.5H536.5V305.3H537V305.9H537.5V305.2H538V300.4H538.5V305.3H539V304.3H539.5V306.2H540V305.2H540.5V306.1H541V304.7H541.5V305.8H542V305.3H542.5V305.2H543V305.1H543.5V304.5H544V305.2H544.5V305.4H545V300.8H545.5V304.4H546V304.1H546.5V304.2H547V301.4H547.5V305.1H548V305.4H548.5V304.5H549V306.1H549.5V306.2H550V305.9H550.5V305.8H551V306H551.5V307H552V301.9H552.5V306H553V300.5H553.5V304.9H554V300.4H554.5V307.1H555V305H555.5V305.4H556V305.5H556.5V304.8H557V304.5H557.5V302H558V304.6H558.5V305H559V305.5H559.5V305.2H560V305.8H560.5V304.8H561V305.9H561.5V304.4H562V304.6H562.5V305.9H563V305.4H563.5V304.5H564V304.3H564.5V304.3H565V301.7H565.5V304.6H566V304.4H566.5V305.1H567V302.4H567.5V305.8H568V304.8H568.5V305.8H569V304.9H569.5V301.9H570V305.5H570.5V305.5H571V305.9H571.5V304.8H572V305.4H572.5V305.9H573V305.1H573.5V305.1H574V304.7H574.5V304.9H575V307.8H575.5V304.2H576V303.9H576.5V308H577V305.1H577.5V304H578V305.4H578.5V300.9H579V305.9H579.5V301.9H580V302.6H580.5V304.9H581V304H581.5V300.5H582V305.1H582.5V304.7H583V304H583.5V303.9H584V300.4H584.5V304.9H585V303.9H585.5V305.7H586V307H586.5V301.7H587V304.8H587.5V304.9H588V300.3H588.5V304.2H589V305.2H589.5V305.5H590V303.9H590.5V304.3H591V307.6H591.5V305.9H592V305.6H592.5V303.9H593V305.3H593.5V304.8H594V305.6H594.5V304H595V304.5H595.5V305.9H596V300H596.5V304.9H597V302.4H597.5V305.8H598V304.9H598.5V305.4H599V302.4H599.5V305.8H600V304.9H600.5V305.2H601V304.2H601.5V305H602V305.5H602.5V304.6H603V304.8H603.5V305.7H604V305.1H604.5V307.2H605V304.3H605.5V303.9H606V304.8H606.5V304.2H607V301.4H607.5V305.4H608V303.8H608.5V299.9H609V305.7H609.5V303.8H610V300.4H610.5V302.3H611V301.8H611.5V304.8H612V309H612.5V305.3H613V304.6H613.5V305.4H614V304.1H614.5V304.6H615V304H615.5V305.2H616V305.1H616.5V304.7H617V304H617.5V305.4H618V305.7H618.5V305.5H619V304.2H619.5V300H620V305.4H620.5V304.9H621V303.9H621.5V300.3H622V302.2H622.5V304.9H623V304.1H623.5V305H624V304.2H624.5V305.2H625V304H625.5V305.1H626V305.7H626.5V305.8H627V307.9H627.5V305.7H628V305.3H628.5V305.1H629V306.8H629.5V308H630V305.7H630.5V300.5H631V305.8H631.5V305.7H632V300H632.5V300.3H633V307H633.5V305.5H634V303.8H634.5V303.8H635V301.2H635.5V301.9H636V304H636.5V304.3H637V300.6H637.5V305.5H638V305.1H638.5V305.2H639V305.6H639.5V303.9H640V305H640.5V303.8H641V305.4H641.5V302.3H642V299.9H642.5V304.1H643V303.9H643.5V299.9H644V305.5H644.5V308.8H645V301H645.5V304.1H646V300.4H646.5V304.6H647V305.6H647.5V304.9H648V304.1H648.5V302.6H649V305.4H649.5V304.4H650V305.5H650.5V304.2H651V305.5H651.5V304.2H652V305.1H652.5V300.2H653V303.9H653.5V304.9H654V304H654.5V305H655V305.6H655.5V304.2H656V308.9H656.5V304.9H657V304.5H657.5V305.4H658V304.4H658.5V300.9H659V300.4H659.5V308H660V304H660.5V304H661V304.7H661.5V299.9H662V304.6H662.5V307.3H663V304.6H663.5V301H664V304.8H664.5V304.9H665V304.4H665.5V304.1H666V305.4H666.5V304.4H667V300.2H667.5V305.6H668V304.3H668.5V306.8H669V303.9H669.5V305.8H670V304.1H670.5V304.3H671V304.2H671.5V305.7H672V306.7H672.5V304H673V304.9H673.5V305.8H674V308.9H674.5V304.8H675V308.8H675.5V304.1H676V304.4H676.5V304.2H677V304.8H677.5V301.9H678V304.6H678.5V305.3H679V306.5H679.5V305.6H680V304.2H680.5V304.5H681V304.9H681.5V305.5H682V304.7H682.5V306.9H683V305.2H683.5V303.8H684V305.2H684.5V305.1H685V301.9H685.5V304.1H686V303.8H686.5V308.9H687V305.3H687.5V306.5H688V303.9H688.5V304.8H689V308.5H689.5V300.5H690V305H690.5V301H691V304.7H691.5V304.7H692V303.9H692.5V305.1H693V305.3H693.5V307.9H694V301.8H694.5V300.9H695V304.1H695.5V305.4H696V305.3H696.5V308.7H697V302.5H697.5V304.4H698V305.6H698.5V305.4H699V304.9H699.5V305.7H700V301.2H700.5V305.7H701V304.4H701.5V305.2H702V300.1H702.5V305.7H703V305.4H703.5V305.8H704V304.5H704.5V304.6H705V305H705.5V305.3H706V305.5H706.5V304H707V305.3H707.5V305.3H708V305.1H708.5V304.4H709V304.8H709.5V304.4H710V305.8H710.5V305.5H711V299.9H711.5V305H712V305.1H712.5V305.3H713V304.2H713.5V304.7H714V304.3H714.5V303.9H715V302.1H715.5V300.8H716V299.9H716.5V304.1H717V302H717.5V304H718V305.3H718.5V304.6H719V304.9H719.5V302.3H720V305.7H720.5V305.5H721V301.4H721.5V304.7H722V305.7H722.5V304.4H723V305.7H723.5V303.9H724V303.9H724.5V305.6H725V308.7H725.5V304.2H726V304.2H726.5V304.2H727V302.6H727.5V305.8H728V305H728.5V305.1H729V304.3H729.5V304.2H730V304.6H730.5V305.5H731V304.8H731.5V303.8H732V307.6H732.5V302.2H733V304.9H733.5V304H734V300H734.5V301.4H735V301.2H735.5V308.5H736V304.6H736.5V300H737V305.8H737.5V305.2H738V304.9H738.5V302.3H739V305.7H739.5V304.7H740V301.3H740.5V305.5H741V300.3H741.5V302.4H742V304.3H742.5V305.1H743V305H743.5V304.1H744V300.7H744.5V307.8H745V308.5H745.5V300.2H746V304.9H746.5V304.7H747V305.8H747.5V305.4H748V303.8H748.5V305.2H749V305.7H749.5V305.8H750V304.3H750.5V304.9H751V305H751.5V304.7H752V304.2H752.5V305.3H753V303.8H753.5V305.1H754V305.3H754.5V305.3H755V304.2H755.5V303.9H756V305.3H756.5V304.4H757V304.8H757.5V304.7H758V305.6H758.5V305.6H759V304.9H759.5V305.2H760V305.2H760.5V304.6H761V301.2H761.5V304.6H762V305H762.5V304.3H763V304.7H763.5V305.3H764V304.8H764.5V305.8H765V303.9H765.5V304.7H766V305.1H766.5V301.1H767V304.6H767.5V305.2H768V304.3H768.5V304H769V302.6H769.5V305.1H770V304H770.5V304.7H771V305.8H771.5V304.9H772V301.9H772.5V301.6H773V304.1H773.5V304.2H774V305.7H774.5V308.7H775V304.6H775.5V304.2H776V305.6H776.5V304H777V303.9H777.5V299.9H778V305.1H778.5V305.1H779V304.8H779.5V304.8H780V305.1H780.5V303.9H781V304.2H781.5V303.8H782V305.9H782.5V304.5H783V304H783.5V304.7H784V305H784.5V307.2H785V304.8H785.5V303.9H786V300.5H786.5V307.7H787V304.5H787.5V304.6H788V304.1H788.5V304.3H789V303.9H789.5V300.5H790V304.7H790.5V304.6H791V305.1H791.5V305.3H792V302.2H792.5V305.6H793V304.4H793.5V305.5H794V304H794.5V304.4H795V304.1H795.5V305.2H796V304.5H796.5V301.3H797V305H797.5V305.6H798V305H798.5V305.4H799V304.1H799.5V304.6H800V304.4H800.5V305.9H801V304.8H801.5V300.5H802V304.6H802.5V300.8H803V304.9H803.5V305H804V301.8H804.5V308.8H805V304H805.5V305.2H806V304.8H806.5V304.4H807V305.9H807.5V305.9H808V303.9H808.5V304.5H809V303.9H809.5V308.2H810V305.5H810.5V305.2H811V304.1H811.5V300.1H812V305.5H812.5V300.3H813V304H813.5V305.8H814V305H814.5V305.9H815V300.9H815.5V303.9H816V300.1H816.5V301H817V305H817.5V304H818V305H818.5V305.6H819V304.2H819.5V304.7H820V303.9H820.5V304.9H821V304.3H821.5V304.7H822V304.4H822.5V304H823V304.9H823.5V304.8H824V305.9H824.5V305.4H825V305.5H825.5V308.2H826V305.7H826.5V301.6H827V306H827.5V304.8H828V308.6H828.5V302.7H829V304.4H829.5V308.3H830V307.1H830.5V300.2H831V302.8H831.5V305.8H832V305.6H832.5V305.2H833V301.6H833.5V304.5H834V305.2H834.5V304H835V304.8H835.5V305.1H836V305H836.5V305.4H837V300.4H837.5V304H838V305.3H838.5V305.1H839V304.4H839.5V305.6H840V301.3H840.5V304H841V304.8H841.5V301.5H842V301.9H842.5V304.3H843V304.2H843.5V304.3H844V305.3H844.5V306H845V306H845.5V304.5H846V301.5H846.5V304.5H847V305.7H847.5V305.3H848V305.7H848.5V304.5H849V305.4H849.5V301.5H850V304H850.5V305.1H851V305.1H851.5V304.7H852V305.7H852.5V306H853V307H853.5V305.4H854V305.2H854.5V304.9H855V305.9H855.5V304.1H856V304.7H856.5V304.3H857V305.2H857.5V305.8H858V304.1H858.5V305.3H859V305.2H859.5V305.9H860V305.3H860.5V304.4H861V305.5H861.5V306.1H862V306.1H862.5V304.8H863V304.9H863.5V307.2H864V305.1H864.5V304.4H865V304.5H865.5V304.7H866V306H866.5V305.2H867V304.9H867.5V304.3H868V304.3H868.5V305.1H869V304.3H869.5V306.1H870V304.8H870.5V300.7H871V306.2H871.5V304.9H872V304.9H872.5V301.1H873V304.9H873.5V305.8H874V302.3H874.5V305.2H875V302.6H875.5V302.6H876V305.7H876.5V304.4H877V304.9H877.5V306.2H878V304.3H878.5V304.4H879V300.3H879.5V305.7H880V305.8H880.5V302.2H881V305.7H881.5V308.3H882V305.1H882.5V305.8H883V301.1H883.5V306.3H884V301.4H884.5V307.2H885V301.2H885.5V305.7H886V305.6H886.5V304.6H887V305H887.5V304.4H888V306.2H888.5V304.3H889V306.2H889.5V305.2H890V305.2H890.5V305.5H891V301.8H891.5V301.4H892V304.7H892.5V306.1H893V305.7H893.5V305.9H894V305H894.5V305.1H895V301.2H895.5V300.6H896V304.7H896.5V305.7H897V305.8H897.5V303.1H898V308.5H898.5V304.9H899V305.9H899.5V306.1H900V305.4H900.5V307H901V306H901.5V309.1H902V307.8H902.5V307.6H903V307.8H903.5V308.6H904V308.4H904.5V310.7H905V308.5H905.5V308.9H906V310.2H906.5V310.2H907V310.2H907.5V310.7H908V312.9H908.5V308.6H909V314.3H909.5V312.6H910V313H910.5V312.5H911V313.2H911.5V313.8H912V314.6H912.5V315.1H913V315.3H913.5V315.7H914V315.9H914.5V316.4H915V317.1H915.5V317.3H916V317.2H916.5V318.2H917V318.3H917.5V318.5H918V318.6H918.5V319H919V319.7H919.5V318.9H920V320.2H920.5V321H921V320.8H921.5V321.8H922V321.9H922.5V321.6H923V322.1H923.5V322.1H924V323H924.5V322.8H925V322.9H925.5V323.1H926V323.7H926.5V323.5H927V323.8H927.5V324H928V324.2H928.5V324.1H929V324.1H929.5V324.5H930V324.5H930.5V324.5H931V324.5H931.5V324.5H932V324.5H932.5V324.5H933V324.5H933.5V324.5H934V324.5H934.5V324.5H935V324.5H935.5V324.5H936V324.5H936.5V324.5H937V324.5H937.5V324.5H938V324.5H938.5V324.5H939V324.5H939.5V324.5H940V324.5H940.5V324.5H941V324.5H941.5V324.5H942V324.5H942.5V324.5H943V324.5H943.5V324.5H944V324.5H944.5V324.5H945V324.5H945.5V324.5H946V324.5H946.5V326.3H946V326.3H945.5V326.3H945V326.3H944.5V326.3H944V326.3H943.5V326.3H943V326.3H942.5V326.3H942V326.3H941.5V326.3H941V326.3H940.5V326.3H940V326.3H939.5V326.3H939V326.3H938.5V326.3H938V326.3H937.5V326.3H937V326.3H936.5V326.3H936V326.3H935.5V326.3H935V326.3H934.5V326.3H934V326.3H933.5V326.3H933V326.3H932.5V326.3H932V326.3H931.5V326.3H931V326.3H930.5V326.3H930V326.3H929.5V326.4H929V326.5H928.5V326.7H928V326.7H927.5V326.6H927V327H926.5V327.6H926V327.6H925.5V328.2H925V327.7H924.5V328.4H924V328.7H923.5V329.4H923V329.1H922.5V329.5H922V329.7H921.5V329.8H921V330.4H920.5V331.5H920V330.3H919.5V330.6H919V331.4H918.5V333H918V332.1H917.5V332.4H917V333.9H916.5V332.9H916V333.2H915.5V333.9H915V336.2H914.5V335.3H914V335.2H913.5V336H913V338.2H912.5V336.4H912V336.9H911.5V339.2H911V340.4H910.5V337.7H910V338.7H909.5V338.7H909V339.6H908.5V339.8H908V339.5H907.5V340.2H907V341.1H906.5V340.3H906V341.4H905.5V342.4H905V344.7H904.5V342.5H904V343.2H903.5V342.6H903V342.6H902.5V346.3H902V343.6H901.5V344.3H901V343.4H900.5V345.4H900V345.2H899.5V344.9H899V341.5H898.5V345.1H898V349.3H897.5V345.6H897V345H896.5V350.4H896V346.3H895.5V345.7H895V344.7H894.5V345.7H894V348.8H893.5V346.2H893V342.9H892.5V346.5H892V346.5H891.5V349.2H891V348.9H890.5V345.3H890V345.5H889.5V347.8H889V344.9H888.5V344.6H888V346.5H887.5V345.9H887V344.9H886.5V345.8H886V344.6H885.5V348.4H885V346.5H884.5V344.7H884V346.1H883.5V346.3H883V346.3H882.5V342.6H882V345.1H881.5V342.1H881V346H880.5V346H880V345.6H879.5V345H879V346.3H878.5V350.5H878V345.8H877.5V347.8H877V344.7H876.5V344.7H876V348.7H875.5V345.5H875V346.6H874.5V342.1H874V345.4H873.5V350H873V344.9H872.5V345.1H872V341.5H871.5V345.9H871V345.2H870.5V346.3H870V345.1H869.5V344.8H869V344.7H868.5V345.4H868V350.2H867.5V346.4H867V346.5H866.5V346.6H866V344.8H865.5V345.3H865V345.4H864.5V344.9H864V346H863.5V345.2H863V345.4H862.5V346.6H862V346.3H861.5V346.4H861V346H860.5V346.2H860V345.6H859.5V346.3H859V346.3H858.5V349.3H858V342.9H857.5V349.7H857V343.5H856.5V345.4H856V346.7H855.5V345.5H855V345H854.5V345H854V346.1H853.5V345.8H853V345.4H852.5V345.1H852V344.9H851.5V344.9H851V345.5H850.5V344.8H850V345H849.5V345.3H849V345.1H848.5V345.3H848V342.3H847.5V346.4H847V349H846.5V346.6H846V346.2H845.5V345.4H845V345.2H844.5V346.6H844V341.6H843.5V345.5H843V346.5H842.5V345H842V342.9H841.5V345H841V348.6H840.5V345.8H840V345H839.5V345.5H839V345.6H838.5V346.7H838V344.8H837.5V345.1H837V346.7H836.5V350.4H836V343.7H835.5V345.5H835V349.1H834.5V346.1H834V346.3H833.5V345.4H833V345.3H832.5V346.7H832V345.6H831.5V348.9H831V348.1H830.5V349H830V343.3H829.5V342.8H829V346.4H828.5V345.4H828V348.5H827.5V346.7H827V346.2H826.5V342.6H826V344.8H825.5V346.9H825V345.3H824.5V346.6H824V346.6H823.5V345.9H823V350.1H822.5V350.9H822V346.1H821.5V345.9H821V346.3H820.5V346.2H820V346.8H819.5V346.2H819V345.2H818.5V346.7H818V348.8H817.5V345.7H817V345.6H816.5V342.2H816V345.6H815.5V345.2H815V345.6H814.5V346.3H814V345.9H813.5V346.5H813V346.9H812.5V346.9H812V345.9H811.5V345.1H811V349H810.5V350.7H810V345.2H809.5V346.9H809V345.1H808.5V350.2H808V346.6H807.5V344.9H807V345.2H806.5V349.2H806V346.6H805.5V345.5H805V345.8H804.5V345.3H804V346.8H803.5V346.6H803V346.3H802.5V346.7H802V347H801.5V349.7H801V346.1H800.5V346.2H800V346.5H799.5V346.7H799V345.5H798.5V346.4H798V346H797.5V345.5H797V346.5H796.5V346.4H796V346.3H795.5V346.6H795V350.4H794.5V345.2H794V346H793.5V345H793V350.4H792.5V349.1H792V350.7H791.5V343.2H791V345.4H790.5V350.6H790V346.8H789.5V346H789V345.2H788.5V345.6H788V345.3H787.5V346.5H787V345.1H786.5V346.8H786V347H785.5V346.1H785V343.7H784.5V346.5H784V345.9H783.5V346.5H783V345.1H782.5V345.6H782V342.6H781.5V346.9H781V342.6H780.5V345.2H780V345.7H779.5V346.8H779V346.5H778.5V345.6H778V345.2H777.5V346.9H777V350.7H776.5V344.1H776V346.4H775.5V346.6H775V345.5H774.5V344H774V349.2H773.5V346.2H773V345.4H772.5V345.7H772V346.7H771.5V345.6H771V343.3H770.5V345.8H770V346.7H769.5V346.3H769V345.8H768.5V345H768V349.2H767.5V346H767V345.1H766.5V345.3H766V345.9H765.5V346.4H765V345.8H764.5V345.2H764V349.6H763.5V345H763V345.1H762.5V342.9H762V346.3H761.5V345.7H761V346H760.5V345.4H760V350.8H759.5V346.9H759V346.1H758.5V345.6H758V344.2H757.5V348.9H757V345.4H756.5V345.3H756V349.5H755.5V346.7H755V348.3H754.5V345.9H754V342.9H753.5V346.6H753V345H752.5V350.9H752V346.3H751.5V348.4H751V346.7H750.5V349.4H750V345.5H749.5V347H749V345.5H748.5V345.1H748V345.9H747.5V350.3H747V345.7H746.5V345.9H746V346.8H745.5V345.4H745V348.3H744.5V343.3H744V345H743.5V350.9H743V347H742.5V348.7H742V345.3H741.5V346.1H741V346.6H740.5V346.2H740V345.7H739.5V345.5H739V345.1H738.5V346.4H738V350H737.5V346.6H737V346.4H736.5V346.6H736V346.3H735.5V349.2H735V349.1H734.5V345.2H734V343.1H733.5V348.4H733V345.9H732.5V346.9H732V345.5H731.5V345.2H731V346.4H730.5V345.8H730V348.2H729.5V346.4H729V345.6H728.5V345.3H728V345.6H727.5V345.9H727V345.1H726.5V345.9H726V345.5H725.5V345.2H725V349.8H724.5V345.3H724V345.1H723.5V350H723V346.6H722.5V347H722V346.7H721.5V345.5H721V346.6H720.5V345.8H720V345.8H719.5V348.9H719V348.5H718.5V345.9H718V345.3H717.5V346.9H717V345.2H716.5V348.3H716V346.2H715.5V346.6H715V350.1H714.5V346H714V346H713.5V346.5H713V349.8H712.5V345.1H712V349.1H711.5V345.2H711V346.9H710.5V345.7H710V346.8H709.5V344.2H709V346.8H708.5V346.2H708V345.2H707.5V344.9H707V346.2H706.5V349.9H706V346.5H705.5V345.2H705V346.8H704.5V346.3H704V350.1H703.5V345.1H703V350H702.5V345.5H702V346.5H701.5V345.4H701V345.4H700.5V341.9H700V348.2H699.5V349.3H699V346.1H698.5V345.2H698V343.8H697.5V346.1H697V346.3H696.5V345H696V345H695.5V346H695V346H694.5V345.6H694V345.4H693.5V345.6H693V350.8H692.5V346.1H692V346.9H691.5V345.6H691V345.4H690.5V343.2H690V343.4H689.5V345.8H689V348.6H688.5V345H688V345.9H687.5V346.3H687V349.4H686.5V346.1H686V350.6H685.5V346.5H685V346.8H684.5V345.6H684V345H683.5V346.7H683V350.7H682.5V345.6H682V350.9H681.5V345.7H681V348.5H680.5V345.1H680V345.2H679.5V346.1H679V346.5H678.5V346.3H678V346.6H677.5V350.7H677V349.7H676.5V346H676V345.2H675.5V346.5H675V349.8H674.5V345H674V349.9H673.5V345.2H673V343.1H672.5V342.8H672V345.3H671.5V345H671V345.1H670.5V346.7H670V345.4H669.5V346.7H669V345.5H668.5V345.6H668V345H667.5V348.2H667V345.6H666.5V345.9H666V346.3H665.5V345.9H665V346.7H664.5V345.3H664V345.8H663.5V350.1H663V346.9H662.5V349.8H662V350.9H661.5V342H661V346.2H660.5V345.6H660V345.7H659.5V345.4H659V346.8H658.5V343.8H658V350.1H657.5V342.2H657V345.2H656.5V349.5H656V350.3H655.5V350.6H655V345.9H654.5V346.2H654V345.8H653.5V345.1H653V347H652.5V347H652V345.5H651.5V342.6H651V348.4H650.5V345.7H650V350.6H649.5V346H649V346H648.5V350.3H648V346H647.5V346.1H647V345H646.5V346.1H646V345H645.5V350.2H645V345.4H644.5V345.4H644V349.3H643.5V343.7H643V345.8H642.5V345.9H642V345.9H641.5V350.5H641V346.3H640.5V343.2H640V346.3H639.5V346H639V345.1H638.5V350.2H638V350.8H637.5V342.7H637V348.8H636.5V346.2H636V350.4H635.5V346.6H635V345.2H634.5V348.6H634V346.9H633.5V346.6H633V346.4H632.5V344.9H632V346.4H631.5V345.1H631V349.6H630.5V345H630V349.8H629.5V346.9H629V350.6H628.5V345.7H628V345.1H627.5V350.6H627V346.1H626.5V350.5H626V349.3H625.5V343.6H625V346.6H624.5V345.9H624V345H623.5V346.4H623V345.1H622.5V345.7H622V345.2H621.5V348.6H621V346.8H620.5V345H620V345.9H619.5V346H619V345.1H618.5V346.9H618V345.8H617.5V346.1H617V343.4H616.5V345.8H616V346.2H615.5V345H615V345H614.5V348.3H614V347H613.5V346.8H613V346.1H612.5V345.5H612V349.8H611.5V345.8H611V346.2H610.5V345.6H610V345.1H609.5V345H609V346H608.5V346.8H608V345.5H607.5V345H607V346.7H606.5V349.1H606V346.6H605.5V346.5H605V345.5H604.5V345.8H604V346.8H603.5V344.9H603V346.2H602.5V343.4H602V345.6H601.5V346H601V345.8H600.5V347H600V346.9H599.5V349.5H599V345.4H598.5V344H598V345.3H597.5V344.9H597V345.9H596.5V347H596V345.7H595.5V345.8H595V350.1H594.5V346.2H594V345.1H593.5V342.3H593V346.5H592.5V344.9H592V346.9H591.5V350.3H591V345.5H590.5V348.4H590V345.8H589.5V345.7H589V345.2H588.5V348.3H588V346.9H587.5V345H587V346.4H586.5V345.2H586V346.1H585.5V342.7H585V345.6H584.5V346.1H584V346.4H583.5V345.2H583V345.7H582.5V346.5H582V350.6H581.5V345.8H581V346.7H580.5V350.5H580V343.4H579.5V350.5H579V344.1H578.5V346.5H578V350.2H577.5V345.6H577V345.6H576.5V342H576V342.1H575.5V345.1H575V345.7H574.5V348.2H574V350.1H573.5V344.9H573V346H572.5V348.1H572V344.9H571.5V346.2H571V344.9H570.5V345.4H570V344.9H569.5V346H569V345.3H568.5V349.8H568V344.9H567.5V346.1H567V346.2H566.5V346.5H566V349.5H565.5V344.8H565V346.6H564.5V346H564V345.9H563.5V345.8H563V346.8H562.5V348.7H562V348.8H561.5V345.7H561V346.1H560.5V346H560V346.6H559.5V345.8H559V346.6H558.5V346.3H558V344.8H557.5V345.4H557V345.7H556.5V349.7H556V350.1H555.5V350.1H555V345.2H554.5V346.3H554V346.3H553.5V346.3H553V345.2H552.5V343.8H552V346.7H551.5V348.7H551V345.6H550.5V346.3H550V344.8H549.5V345.5H549V347.8H548.5V348.5H548V345.5H547.5V344.9H547V346.6H546.5V346.2H546V344.9H545.5V349.2H545V344.8H544.5V345.5H544V349.4H543.5V350.2H543V344.6H542.5V344.8H542V345H541.5V345.3H541V344.9H540.5V345.7H540V345.7H539.5V344.8H539V342.9H538.5V344.6H538V345.4H537.5V345.4H537V347.8H536.5V344.6H536V349.4H535.5V345.4H535V346.4H534.5V345.4H534V345.9H533.5V346.4H533V346.1H532.5V345.6H532V345.3H531.5V345.2H531V344.6H530.5V346H530V345.7H529.5V346H529V346.2H528.5V345.2H528V346.1H527.5V345.6H527V346H526.5V349.5H526V345.5H525.5V344.5H525V345.8H524.5V341.9H524V348.3H523.5V341.4H523V345.4H522.5V346.3H522V344.9H521.5V344.6H521V345.2H520.5V345.1H520V349.8H519.5V346.2H519V346.2H518.5V345.7H518V345.1H517.5V344.8H517V346H516.5V344.9H516V345.1H515.5V342.9H515V345.3H514.5V346H514V349.3H513.5V346.1H513V349.8H512.5V348.5H512V344.7H511.5V346.3H511V345.4H510.5V344.9H510V345H509.5V348.7H509V343.5H508.5V345.5H508V348.1H507.5V344.6H507V348.2H506.5V348H506V345.1H505.5V346.4H505V346.5H504.5V349.6H504V350H503.5V346.2H503V345H502.5V342.1H502V342.4H501.5V346.6H501V346H500.5V344.7H500V345.2H499.5V345.2H499V346.3H498.5V345.5H498V344.9H497.5V344.9H497V348.6H496.5V346.1H496V346.6H495.5V349H495V344.8H494.5V344.7H494V346.5H493.5V346.1H493V348.9H492.5V346.5H492V344.7H491.5V346.7H491V345.4H490.5V344.9H490V346.2H489.5V349.5H489V345.2H488.5V343.1H488V345.5H487.5V349.4H487V345.4H486.5V346.2H486V345.5H485.5V346.1H485V344.9H484.5V345.2H484V345.8H483.5V348.1H483V346.2H482.5V345.6H482V345.4H481.5V345.2H481V345.3H480.5V348.3H480V342.2H479.5V346.6H479V345.1H478.5V346.5H478V345.7H477.5V348.5H477V342.3H476.5V346.7H476V348.5H475.5V345.9H475V346.4H474.5V345.6H474V345.8H473.5V345.8H473V345.2H472.5V346.4H472V346.8H471.5V344.9H471V348H470.5V346.3H470V349.7H469.5V346.5H469V346.8H468.5V344.9H468V346.2H467.5V346.4H467V344.9H466.5V345.4H466V345.8H465.5V346.2H465V346.2H464.5V346.4H464V346.2H463.5V342.1H463V345.5H462.5V345.8H462V346.1H461.5V345.9H461V350.1H460.5V345.8H460V346.5H459.5V346.6H459V346.1H458.5V343H458V346.8H457.5V346.3H457V349.6H456.5V349.2H456V349.3H455.5V345.9H455V346.3H454.5V346.2H454V345.1H453.5V346.1H453V345.7H452.5V345.6H452V346.8H451.5V345.1H451V346.5H450.5V345.6H450V345.1H449.5V346.5H449V342.1H448.5V348.9H448V343.4H447.5V346.8H447V348H446.5V348.1H446V346.7H445.5V342.3H445V348.3H444.5V346.2H444V346.7H443.5V346.3H443V350.3H442.5V345.1H442V346.4H441.5V345.1H441V342.6H440.5V346.2H440V346.1H439.5V346.6H439V345H438.5V345.4H438V346.7H437.5V347.9H437V345.7H436.5V343.8H436V346.6H435.5V349.5H435V345.2H434.5V346.1H434V346.1H433.5V341.6H433V345.3H432.5V345.5H432V345.3H431.5V345.5H431V346.4H430.5V343H430V348.3H429.5V346.3H429V345.6H428.5V345.2H428V344.9H427.5V350.5H427V346.3H426.5V346.4H426V346.6H425.5V349.8H425V344.7H424.5V345.9H424V346.2H423.5V348.5H423V345.5H422.5V345.5H422V346H421.5V345.6H421V345.4H420.5V343.1H420V349H419.5V348.5H419V345H418.5V346.1H418V344.8H417.5V346.3H417V345.3H416.5V347.8H416V345.5H415.5V346.4H415V345.8H414.5V345.8H414V347.5H413.5V344.8H413V345.9H412.5V348.6H412V342.7H411.5V345H411V346.2H410.5V344.4H410V344.7H409.5V341.4H409V346.3H408.5V346.3H408V346.3H407.5V344.8H407V345.9H406.5V344.9H406V345.5H405.5V344.6H405V345.7H404.5V345.7H404V347.7H403.5V348.9H403V347.4H402.5V341.3H402V345.9H401.5V345.4H401V345.8H400.5V344.3H400V344.9H399.5V349.4H399V345.6H398.5V344.8H398V346.2H397.5V345.9H397V345H396.5V345.5H396V345.3H395.5V345H395V345.1H394.5V348.7H394V345.9H393.5V348.2H393V344.9H392.5V346H392V345.7H391.5V344.2H391V344.5H390.5V344.2H390V345H389.5V346.1H389V345.1H388.5V345.6H388V348.5H387.5V348.3H387V345.1H386.5V345.9H386V345.8H385.5V348.1H385V344.6H384.5V344.7H384V345.8H383.5V344.7H383V345.9H382.5V344.3H382V348.3H381.5V344.3H381V345.6H380.5V341.9H380V342.9H379.5V344.1H379V344H378.5V344.5H378V349.8H377.5V344.2H377V342.8H376.5V344.5H376V347.8H375.5V345.5H375V347.2H374.5V345.8H374V345.8H373.5V345.7H373V345.8H372.5V345.5H372V345.4H371.5V345.7H371V345.6H370.5V345.5H370V344.4H369.5V344.3H369V344.6H368.5V345.9H368V344.4H367.5V342H367V347.7H366.5V344.8H366V346.1H365.5V345H365V348.5H364.5V344.9H364V345.6H363.5V344.7H363V344.2H362.5V345.2H362V345.6H361.5V345H361V344.9H360.5V346H360V345.8H359.5V344.3H359V344.4H358.5V349.7H358V348.9H357.5V345.2H357V344.6H356.5V344.6H356V344.8H355.5V345.4H355V346H354.5V345.9H354V347.5H353.5V345.7H353V348H352.5V342.3H352V344.4H351.5V345.4H351V344.8H350.5V346.3H350V344.8H349.5V344.9H349V345.3H348.5V345.5H348V345.2H347.5V345.6H347V345.3H346.5V345.9H346V348.1H345.5V343.5H345V345.9H344.5V345.5H344V345H343.5V347.9H343V345.3H342.5V344.4H342V346.2H341.5V349.7H341V347.7H340.5V349.9H340V341.8H339.5V345.1H339V345.7H338.5V342H338V343.2H337.5V346.3H337V345.3H336.5V348.1H336V344.9H335.5V346.1H335V345.3H334.5V349H334V345.7H333.5V345.2H333V344.8H332.5V347.5H332V345H331.5V344.7H331V346H330.5V346.3H330V341.7H329.5V343.1H329V346.1H328.5V345.5H328V349.3H327.5V346.3H327V344.5H326.5V345.7H326V344.6H325.5V346H325V345.4H324.5V349.8H324V345.6H323.5V345.8H323V349.7H322.5V345.1H322V344.9H321.5V345.5H321V341.8H320.5V345H320V344.3H319.5V346.2H319V346.3H318.5V348.1H318V346.2H317.5V344.6H317V346.1H316.5V344.7H316V344.4H315.5V344.7H315V345.3H314.5V343.2H314V344.4H313.5V348.4H313V344.4H312.5V345.7H312V345.2H311.5V345.2H311V342H310.5V348.3H310V345.5H309.5V346H309V344.6H308.5V349.1H308V344.8H307.5V344.4H307V345.3H306.5V344.2H306V348H305.5V347.8H305V345.1H304.5V344.6H304V345.9H303.5V344.1H303V344.4H302.5V345.3H302V344.6H301.5V344.8H301V344.7H300.5V344.7H300V345H299.5V342.6H299Z" fill="#66a0d0"/><path d="M299.5,307.4V316M299.5,343.4V337.9M302.1,305.4V310.4M302.1,345.4V339.6M304.3,305.3V317.3M304.3,345.5V333.9M306.2,305.3V317.1M309.1,305.3V312.9M309.1,345.5V339.6M310.8,305.2V310.8M310.8,345.6V334.5M311.8,305.2V314.8M313.2,305.2V315.1M316,345.7V338.1M317.3,345.7V333.4M318.8,305.1V315M318.8,345.7V341.1M321,345.7V339.6M324.1,305V311.5M327,305V309.7M327,345.8V337.9M328.1,304.9V310.6M328.1,345.9V333.7M329.8,304.9V310.8M329.8,345.9V339.3M332.8,304.9V314.1M334.5,304.9V313.6M334.5,345.9V336.1M337.1,345.8V336.3M339.7,345.8V335.9M341.8,305V309.5M341.8,345.8V334.5M344.8,305V311.8M344.8,345.8V337M345.9,305.1V311.9M345.9,345.7V335.9M348,305.1V315.8M348,345.7V333.9M349.4,305.1V316.4M349.4,345.7V337.8M350.9,305.1V315.1M350.9,345.7V337.5M352.1,305.1V309.8M352.1,345.7V335.7M354.4,305.1V311.1M354.4,345.7V340.5M357.1,305.2V314.1M359.3,305.2V310.6M360.5,305.2V315.4M360.5,345.6V336M363.4,345.6V334.2M365.5,305.3V309.8M367.5,305.3V317.6M367.5,345.5V337M369.6,305.3V310.5M369.6,345.5V337.5M371.1,305.3V314.6M371.1,345.5V340.8M372.8,305.3V315.9M372.8,345.5V334M373.8,305.3V314.9M373.8,345.5V334.1M375,305.4V311.7M375,345.4V335.3M376.8,305.4V310.7M376.8,345.4V337.9M378.4,305.4V313.2M378.4,345.4V339.2M380.9,305.4V312M382.1,345.4V339M384.6,345.5V339.4M387.6,305.3V313.7M387.6,345.5V340.9M390.5,345.5V334M391.6,305.2V312.9M391.6,345.6V333.1M394.4,345.6V333.6M395.9,305.2V311.6M395.9,345.6V336.1M397.8,345.7V339.2M399.7,345.7V340.6M401.6,305.1V313.8M401.6,345.7V339.2M404.1,305.1V316.3M404.1,345.7V334.5M405.7,345.8V340.4M407.7,305V316.2M407.7,345.8V339.7M410.2,305V310.9M410.2,345.8V340.3M412.9,304.9V314.7M412.9,345.9V340.8M414.5,304.9V316.4M416.5,304.9V310.8M417.5,304.9V309.8M419.7,304.8V314.6M419.7,346V337.3M421,304.8V314.9M421,346V337.8M423.4,346V338.9M424.9,346V333.6M426.7,304.7V310.5M426.7,346.1V335.6M428.5,304.7V310.7M428.5,346.1V335.4M430.1,304.7V312.3M430.1,346.1V336.5M431.5,346.1V338.3M433.3,304.6V310.3M433.3,346.2V333.8M436.2,346.2V339.3M437.7,304.6V310.4M437.7,346.2V340.8M439.2,304.6V315.8M439.2,346.2V336.9M440.6,304.5V315.1M440.6,346.3V339.1M442.1,346.3V338.9M448.6,346.4V337.5M451.2,304.4V310.9M451.2,346.4V334.9M453,304.4V311M455.2,304.4V312.3M455.2,346.4V336.6M456.2,304.4V311.6M456.2,346.4V339.4M458.1,304.5V311.7M458.1,346.3V335.6M459.3,304.5V312.5M459.3,346.3V336.4M461.7,304.5V312.8M461.7,346.3V336.2M464.1,304.5V311.2M464.1,346.3V334.2M466.5,304.5V309.4M468.9,304.5V310.6M468.9,346.3V338.4M474.1,304.6V310.7M474.1,346.2V335.8M476,304.6V310.6M476,346.2V335.1M477.1,304.6V313.8M477.1,346.2V336.3M479.2,304.6V313.5M479.2,346.2V337.2M482.2,346.2V338.3M484.8,304.6V316.1M486.7,304.7V314.1M486.7,346.1V338.4M488,304.7V312.2M490.5,304.7V315.5M490.5,346.1V341.2M493.3,304.7V311.7M493.3,346.1V335.7M495.7,304.7V311.1M495.7,346.1V336.3M496.7,346.1V340.1M501,304.8V316.4M506,346V339.7M507.5,304.8V310.5M507.5,346V340.1M510,304.8V312.2M510,346V335.1M512,304.8V312.5M512,346V335.9M514.4,345.9V338.5M516.7,304.9V310.1M518.8,304.9V311.4M520.2,304.9V310.2M520.2,345.9V338.8M521.3,304.9V313.8M522.6,345.9V333.7M523.9,304.9V315.2M526.1,304.9V312.1M526.1,345.9V333.9M528,304.9V312.6M528,345.9V335.5M529.2,304.8V314.9M529.2,346V340.3M531.2,304.8V313.7M531.2,346V339.7M532.8,346V339.3M533.9,304.8V317.3M533.9,346V338.4M535.4,346V338M537.5,346V333.3M539.8,304.8V313.7M539.8,346V335.6M541.3,346V333.8M543.6,304.8V314.2M543.6,346V340.6M544.9,304.7V314.8M544.9,346.1V335.1M547.2,304.7V311.8M547.2,346.1V338.6M548.5,304.7V312M548.5,346.1V339.6M551.5,304.7V316.1M551.5,346.1V338.6M554.3,304.7V315.2M555.5,304.7V312.6M555.5,346.1V337.9M557.8,304.7V310M557.8,346.1V340.8M559.5,304.7V317.1M559.5,346.1V337.3M561,304.6V312.2M563.3,304.6V316.5M564.5,346.2V336.7M565.6,304.6V314.3M565.6,346.2V339.8M566.7,304.6V316.8M566.7,346.2V334.6M568.7,304.6V312.6M568.7,346.2V336.5M570.1,304.6V313.3M570.1,346.2V336.2M572.6,346.2V335.6M574.7,304.6V316.5M574.7,346.2V340.9M576.9,346.3V340.1M578.2,304.5V317.4M578.2,346.3V340.6M579.3,304.5V309.4M579.3,346.3V339.1M582.1,304.5V310.1M582.1,346.3V336.9M583.6,304.5V314.1M585.1,304.5V314.9M585.1,346.3V337.1M588,346.3V337.3M589.6,346.3V334.5M591.2,304.5V312M594,304.4V310.3M595.8,304.4V310.5M595.8,346.4V339.6M598.7,346.4V335.5M599.8,304.4V309.6M599.8,346.4V333.7M602.5,304.4V311.5M602.5,346.4V339.7M605.4,304.4V313.9M606.4,304.4V310.7M606.4,346.4V335M608.6,346.4V336.8M610.5,304.4V309.1M610.5,346.4V336.4M612.4,304.4V310.2M612.4,346.4V340M615,304.4V316.6M615,346.4V337M618,304.4V313.6M618,346.4V341.5M620.6,304.4V311.7M620.6,346.4V341M623,304.4V310.6M623,346.4V337.2M626,304.4V312.1M626,346.4V337.1M628.2,304.4V310.9M628.2,346.4V338.9M630,346.4V335.1M631.6,304.4V311.3M631.6,346.4V341M634.1,304.4V313.9M636.4,304.4V313.7M641.4,304.4V317.1M641.4,346.4V341.5M643.3,304.4V316.4M646,304.4V313.8M646,346.4V339.4M648.6,304.4V311.6M648.6,346.4V336.5M651,304.4V312.4M651,346.4V339.9M653.3,304.4V310.4M653.3,346.4V340.2M656,346.4V339.6M659,304.4V315M659,346.4V334.8M660,304.4V315.7M660,346.4V337.2M664.4,346.4V339.3M666.2,304.4V311.2M666.2,346.4V341.5M668.1,346.4V339.1M670.9,304.4V311.5M670.9,346.4V334.6M673.9,304.4V315.6M673.9,346.4V333.5M676.2,304.4V317.2M677.6,346.4V338.6M680,304.4V311.9M680,346.4V333.5M681.6,304.4V311.4M681.6,346.4V337.5M684.2,304.4V316.9M684.2,346.4V336.2M686.2,346.4V334.9M687.3,304.4V314.7M687.3,346.4V341.5M688.7,304.4V315.5M688.7,346.4V338.5M690.3,304.4V311.7M691.9,304.4V309.5M691.9,346.4V339.9M693.6,346.4V338.9M696.1,304.4V317M696.1,346.4V341.5M698.9,304.4V315M700.2,304.4V313.8M700.2,346.4V333.4M701.6,346.4V340.5M703.9,304.4V314.5M704.9,346.4V339.6M706,304.4V316.4M706,346.4V334.2M710,304.4V317.4M711.3,304.4V315.4M711.3,346.4V337.3M713.6,346.4V341.6M715.1,346.4V337.4M716.2,346.4V335.9M718.3,304.4V316.3M718.3,346.4V335.1M719.7,304.4V310.5M719.7,346.4V337.7M721.9,346.4V334M724.6,304.4V316.7M727.3,304.4V311.2M727.3,346.4V335M729.4,304.4V316.8M730.5,304.4V310.6M730.5,346.4V334.9M732.4,304.4V309.7M732.4,346.4V333.9M734.9,304.4V316.9M734.9,346.4V336.5M736.1,304.4V310.2M736.1,346.4V337.3M738.2,346.4V336.8M740,304.4V311.2M742.9,346.4V333.6M747.1,304.4V312.8M747.1,346.4V337.5M748.7,304.4V310.2M748.7,346.4V339.4M750.4,304.4V311M750.4,346.4V333.6M752,304.4V312.6M752,346.4V339.1M753.5,304.4V314.1M753.5,346.4V337.5M755.3,304.4V311.5M758,304.4V317.1M758,346.4V339.4M759.4,304.4V309.2M759.4,346.4V333.4M760.9,304.4V317.3M762.7,346.4V338.1M765.5,346.4V341.2M768.1,304.4V313.9M770.9,304.4V309.5M770.9,346.4V337M772.8,304.4V313.7M772.8,346.4V340.7M774.7,304.4V309.8M774.7,346.4V333.7M777.4,304.4V310.3M779.1,346.4V333.5M781.8,304.4V315.7M785.9,304.4V313.8M785.9,346.4V335.2M788.5,304.4V311.5M788.5,346.4V338.7M789.8,346.4V334.3M791.7,304.4V316.2M791.7,346.4V337.6M794.2,304.4V310.2M794.2,346.4V340.7M796.4,304.4V312M799.3,346.4V338.3M801.2,304.4V314.7M801.2,346.4V340.8M802.2,304.4V311.3M802.2,346.4V338.5M804.2,304.4V314.4M804.2,346.4V338.6M806.3,346.4V337.5M807.5,304.4V315.8M807.5,346.4V340.2M809.2,304.4V315M810.8,304.5V316.7M810.8,346.3V341.7M814,304.5V309.5M814,346.3V339.8M815.4,346.3V334.9M817.1,304.5V311.4M817.1,346.3V340.1M819.5,304.5V309.7M819.5,346.3V336.9M821.8,304.5V312.8M821.8,346.3V338M824.8,304.5V317.3M824.8,346.3V335.3M826,304.5V312.7M826,346.3V336.7M828.9,304.5V311.7M828.9,346.3V339.3M830.8,346.2V337.6M833.7,304.6V312M833.7,346.2V340.3M839.4,304.6V313.1M840.8,304.6V315M842,304.6V309.8M842,346.2V339.3M846,304.6V311.7M846,346.2V338.4M848.4,346.2V338M851.1,304.7V313M851.1,346.1V337.5M853.3,304.7V316M853.3,346.1V333.6M855,304.7V310.2M855,346.1V338.2M856.3,304.7V311.3M856.3,346.1V334.2M858.4,304.7V312.2M858.4,346.1V341.1M860.4,304.7V310.6M862.8,304.7V312.2M862.8,346.1V334.4M864.6,304.7V315.5M864.6,346.1V337M866.8,304.7V310.4M866.8,346.1V337.8M869.1,304.8V316.8M869.1,346V339.9M870.9,304.8V316.6M870.9,346V338M873.8,304.8V311.7M875.9,304.8V311.7M878,304.8V311.3M880.8,304.8V311.7M880.8,346V341.1M882.7,346V338.9M885.4,346V337.6M889.1,345.9V338.4M890.1,304.9V316.1M890.1,345.9V333.8M892.8,304.9V311.9M892.8,345.9V338.3M894.6,304.9V313.6M896.9,345.9V333.8M898.8,305.3V314.9M901.8,306.8V314.1M901.8,344V336.9M903.2,307.5V314.6M903.2,343.3V337M904.4,308.2V318.8M904.4,342.6V332.6M905.5,309V317.7M908.4,311.2V316.3M908.4,339.6V335.6M910.9,313.1V317.5M912.3,314.3V316.9M912.3,336.5V331.8M915,316.5V321.5M915,334.3V329.7M916.8,317.9V319.7M916.8,332.9V330.1M918,318.7V320.4M918,332.1V330.2M919.6,319.8V322.5M919.6,331V329.6M921.2,330V328.6M923.2,322V323.2M923.2,328.8V328" stroke="#34404f" stroke-opacity="0.5" stroke-width="0.8" fill="none"/></svg>
<div class="cl">Drums</div>
<div class="ct">[Drums][Local][4.2 (latest)]</div>
<div class="cb" style="box-shadow:inset 0 0 0 1.8px #5f93c6"></div>
</div>
<div class="clip" style="top:368.8px;background:#34433f">
<svg width="649" height="80" viewBox="298 368.8 649 80" preserveAspectRatio="none"><path d="M299,407.9H300V407.9H301V407.9H302V407.9H303V402.9H304V403H305V401H306V402.1H307V401.1H308V400.3H309V401.7H310V401.4H311V402.3H312V403H313V401.5H314V401.3H315V402.1H316V403H317V399.8H318V403.7H319V404.5H320V402.7H321V401.9H322V402H323V402.9H324V400.8H325V404.3H326V402.1H327V401.7H328V403.7H329V401.5H330V400.4H331V402.3H332V401.6H333V402.4H334V402.7H335V401.7H336V400.7H337V402.5H338V401.5H339V398.8H340V401.8H341V401.6H342V400.7H343V401.6H344V398H345V402.5H346V403.7H347V401.1H348V400.2H349V401.5H350V400.2H351V400.7H352V401.4H353V401.2H354V402.3H355V398.8H356V402.5H357V405H358V401.3H359V400.8H360V403.2H361V402.3H362V401.5H363V405.2H364V401.4H365V404.5H366V401.4H367V400.8H368V401H369V398.2H370V402.1H371V404.3H372V401.6H373V404.5H374V404H375V403.7H376V401H377V404.7H378V401.9H379V402.1H380V402.9H381V402.1H382V401.4H383V404.9H384V402.5H385V404.2H386V402.8H387V403.6H388V404.8H389V403.3H390V404H391V404H392V405.5H393V404.2H394V403.4H395V404.6H396V403.8H397V404.7H398V405.4H399V405.5H400V406.7H401V405.4H402V406.5H403V404.6H404V405.6H405V406.6H406V406.1H407V404H408V403.8H409V403H410V403.7H411V403.5H412V403.9H413V402.6H414V405.4H415V403.5H416V402.3H417V402.5H418V404.5H419V402.8H420V402.1H421V403.6H422V400.5H423V402.1H424V402.5H425V403H426V403H427V403.4H428V401.7H429V401H430V402.9H431V402.6H432V402.7H433V402.9H434V399.7H435V401.8H436V400.9H437V399.5H438V403.6H439V403.3H440V401.8H441V401.9H442V402.2H443V403H444V402H445V404.9H446V406.8H447V407.1H448V402.7H449V404.9H450V401.5H451V400H452V401.4H453V402.3H454V402.1H455V402.5H456V402.6H457V400.9H458V400.8H459V401.6H460V400.9H461V400.8H462V400.2H463V400.4H464V401.7H465V401.8H466V400.5H467V400.5H468V401.5H469V401.2H470V401.9H471V403.2H472V404.8H473V400.9H474V401H475V398.9H476V401.7H477V402H478V401.6H479V399.2H480V402.3H481V400.4H482V401.8H483V401H484V401.3H485V402.4H486V401.7H487V401.7H488V402H489V404.5H490V398.3H491V399.3H492V400.3H493V401.7H494V401.5H495V398.1H496V401.1H497V402H498V401H499V401H500V402.3H501V401.7H502V404.5H503V404.1H504V403.2H505V401.2H506V405.2H507V404.4H508V401.9H509V402.2H510V402.7H511V404.4H512V402.9H513V402.4H514V403.4H515V401.8H516V403.5H517V398.9H518V401.3H519V398.7H520V402.2H521V402.9H522V400.7H523V400.6H524V401.4H525V402.4H526V400.2H527V403.3H528V400H529V402.5H530V401.1H531V403.4H532V402.5H533V403.9H534V402.8H535V404.3H536V404.2H537V402.6H538V403.9H539V403.1H540V401.7H541V400.8H542V402.6H543V399.3H544V402.1H545V401.4H546V402H547V401.7H548V399.4H549V401.3H550V401.2H551V402.4H552V402.4H553V403.2H554V402.4H555V399.7H556V401.1H557V400.9H558V402.2H559V400.9H560V402.7H561V399.5H562V404.6H563V401.7H564V402.9H565V402H566V401.2H567V403.2H568V401.9H569V403.6H570V402.4H571V402.3H572V403.8H573V402.1H574V402.5H575V403.3H576V407.3H577V407.4H578V403.6H579V400.4H580V403.4H581V402.5H582V402.5H583V402.9H584V403H585V405.4H586V404.5H587V406.1H588V406.9H589V406.4H590V407H591V406.7H592V407H593V406.9H594V405.4H595V403.4H596V403.8H597V402.9H598V402.2H599V403.1H600V402.2H601V399.4H602V402.5H603V401.4H604V400.4H605V400.2H606V404.2H607V400.2H608V400.4H609V399.5H610V400.5H611V400.7H612V400H613V403.2H614V403.9H615V403.1H616V402.5H617V400.3H618V400.3H619V400.9H620V401.9H621V401.9H622V401.9H623V402.7H624V404.5H625V398.1H626V401.1H627V402.8H628V401.5H629V403.5H630V401.7H631V402.8H632V401.6H633V402.2H634V402.6H635V401.8H636V400.4H637V402.5H638V401.2H639V401.2H640V400.7H641V401.2H642V400.2H643V402.3H644V401.6H645V404.3H646V402.1H647V402.7H648V401.1H649V401.1H650V401.3H651V400.6H652V402.9H653V402.6H654V401.5H655V402.7H656V401.9H657V402.1H658V401H659V399H660V401.2H661V402.8H662V401.6H663V402.3H664V405H665V400.5H666V402.5H667V402.6H668V403.4H669V402.4H670V402.7H671V402.2H672V403.4H673V403.6H674V402.5H675V403.8H676V403.1H677V401.5H678V403H679V404.8H680V403.7H681V403.4H682V404.1H683V404.2H684V403.9H685V405.1H686V404.6H687V403.2H688V400.4H689V402.7H690V402.6H691V402.1H692V401.8H693V399.6H694V402.5H695V401.7H696V401.5H697V401.8H698V400.7H699V402.2H700V403.2H701V402H702V401.4H703V401.9H704V400.2H705V402.2H706V402.4H707V402.1H708V402.3H709V404.4H710V401.9H711V402.6H712V401.3H713V405H714V403.9H715V401.1H716V404.8H717V399.2H718V400.9H719V399.7H720V403H721V401.2H722V402.8H723V401.7H724V404.1H725V402.6H726V400.4H727V401.8H728V401.7H729V402H730V404.1H731V401.9H732V403.5H733V404.3H734V403.1H735V403.2H736V401.8H737V401.8H738V399.6H739V403.4H740V402.6H741V401.2H742V402.2H743V402.8H744V402.5H745V403.3H746V402.2H747V401.9H748V401.9H749V401.3H750V400.7H751V399.7H752V401.5H753V402.4H754V402.1H755V402H756V402.9H757V402.8H758V403H759V399.5H760V401.1H761V398.3H762V403H763V404.7H764V401.6H765V401.6H766V401.3H767V402.7H768V399.3H769V402.6H770V401.9H771V402.9H772V404.1H773V401.6H774V401.6H775V402H776V402.9H777V402.7H778V401.5H779V401.6H780V403.1H781V402.8H782V401.8H783V402.9H784V403.4H785V404.6H786V404.3H787V403.1H788V403H789V404.5H790V404.9H791V404.6H792V404.8H793V405.4H794V405.2H795V405.9H796V406.6H797V407.5H798V397.5H799V403.6H800V401.8H801V400.7H802V400.6H803V404.2H804V401.9H805V401.2H806V403.9H807V402.2H808V403.7H809V402.3H810V400.8H811V402.1H812V403.7H813V401.8H814V402.5H815V402.4H816V402.3H817V405H818V401.6H819V399.3H820V402H821V400.5H822V399.8H823V404.6H824V403.3H825V402.3H826V402.4H827V405.1H828V399.6H829V402.9H830V404.6H831V402.3H832V402.2H833V402.2H834V402.9H835V401.6H836V398.8H837V402.3H838V401.6H839V403.2H840V402.2H841V403.2H842V404.1H843V403.7H844V399.7H845V402.4H846V402.8H847V402.7H848V402.9H849V402.3H850V402.1H851V402.1H852V405H853V402.6H854V404.5H855V401.8H856V401.2H857V401.6H858V398.7H859V402.9H860V401.4H861V403H862V402.2H863V401.4H864V401.5H865V401.2H866V402.2H867V401.4H868V402H869V404H870V402.3H871V404.6H872V402.6H873V402.7H874V402.7H875V403.7H876V401.4H877V401H878V402.4H879V401.2H880V401.7H881V400H882V401.9H883V400.9H884V402.7H885V400.9H886V403H887V398.5H888V404.5H889V401.8H890V404.3H891V402.2H892V403.2H893V401.6H894V401.3H895V402.5H896V402.1H897V403.1H898V401.9H899V403H900V401.7H901V403.3H902V403.3H903V404.7H904V401.7H905V404.3H906V405.5H907V402.1H908V403.3H909V405.8H910V407.9H911V407.9H912V407.9H913V407.9H914V407.9H915V407.9H916V407.9H917V407.9H918V407.9H919V407.9H920V407.9H921V407.9H922V407.9H923V407.9H924V407.9H925V407.9H926V407.9H927V407.9H928V407.9H929V407.9H930V407.9H931V407.9H932V407.9H933V407.9H934V407.9H935V407.9H936V407.9H937V407.9H938V407.9H939V407.9H940V407.9H941V407.9H942V407.9H943V407.9H944V407.9H945V407.9H946V407.9H947V409.7H946V409.7H945V409.7H944V409.7H943V409.7H942V409.7H941V409.7H940V409.7H939V409.7H938V409.7H937V409.7H936V409.7H935V409.7H934V409.7H933V409.7H932V409.7H931V409.7H930V409.7H929V409.7H928V409.7H927V409.7H926V409.7H925V409.7H924V409.7H923V409.7H922V409.7H921V409.7H920V409.7H919V409.7H918V409.7H917V409.7H916V409.7H915V409.7H914V409.7H913V409.7H912V409.7H911V409.7H910V413.7H909V414.9H908V415.1H907V412.5H906V415.5H905V415.3H904V415.9H903V415.3H902V414.8H901V415.8H900V414.6H899V413.6H898V416.1H897V414.3H896V416.2H895V416.4H894V417.3H893V415.4H892V415.1H891V415.4H890V416H889V415.6H888V416H887V414.6H886V415.4H885V415.3H884V415.4H883V416.6H882V417H881V416.4H880V413.4H879V415.4H878V416.4H877V415.3H876V415.9H875V415H874V415.3H873V417.4H872V415.8H871V413H870V414.4H869V415.1H868V415.3H867V415.5H866V414.7H865V413H864V416.3H863V414.4H862V415.2H861V415.5H860V416.5H859V415.3H858V413.2H857V415.5H856V416.5H855V414.9H854V415H853V416.2H852V415.8H851V412.7H850V418.1H849V415.1H848V413.4H847V414.6H846V416H845V416H844V415.2H843V414.8H842V414.6H841V415.3H840V416.5H839V417.5H838V412.7H837V413.2H836V413.8H835V416.1H834V417.4H833V416.2H832V415H831V416.1H830V414.5H829V418.7H828V415.6H827V416H826V415.3H825V416.3H824V414.3H823V414.5H822V416H821V418H820V418.1H819V416.2H818V416.4H817V414.8H816V415.4H815V416.6H814V414.6H813V414.9H812V416.7H811V415H810V416H809V415.2H808V415.5H807V414.7H806V417.9H805V415.7H804V418.1H803V419H802V415.7H801V416.5H800V417.2H799V418.3H798V410H797V410.7H796V411.8H795V411.2H794V412.7H793V413.3H792V413.5H791V413.7H790V414.2H789V416.3H788V413.9H787V414.1H786V414.5H785V413.9H784V414.4H783V414.4H782V414.8H781V417.9H780V414.7H779V415.5H778V414.9H777V416.2H776V414.4H775V416.2H774V416.1H773V415.5H772V415.2H771V414.8H770V415.5H769V415.9H768V414.8H767V412.9H766V414.9H765V418.9H764V413.4H763V415.2H762V415.8H761V416.9H760V418.5H759V413.3H758V414.7H757V414.8H756V415.8H755V414.6H754V414.5H753V416.5H752V413.7H751V415.5H750V415.5H749V414.7H748V414.6H747V415.9H746V415.8H745V415.7H744V415.5H743V414.2H742V417.2H741V415.2H740V415H739V415.2H738V415.7H737V415.2H736V415.8H735V414.6H734V416.2H733V413.2H732V418.1H731V415.7H730V415H729V415.7H728V415H727V415.6H726V416.3H725V414.7H724V414.9H723V415.1H722V415.2H721V414.6H720V415.6H719V415.8H718V415.8H717V414.8H716V415.9H715V414.8H714V412.8H713V415.5H712V418.4H711V413.7H710V415.1H709V419.4H708V416.4H707V416.7H706V417.2H705V415.6H704V415.4H703V413H702V412.8H701V415.3H700V416.8H699V415.5H698V416.7H697V416.4H696V417.1H695V416.6H694V417H693V416H692V416H691V416.8H690V414.7H689V414.5H688V414.4H687V413.5H686V414.1H685V413.1H684V413H683V415.8H682V414.5H681V414.1H680V411.8H679V414.4H678V415.6H677V416.3H676V413H675V414H674V414.3H673V415.1H672V414H671V412.6H670V414.8H669V413.9H668V414.7H667V414.8H666V413.6H665V414.4H664V416.8H663V416H662V415.5H661V414.8H660V415.5H659V415.4H658V416.7H657V416.5H656V414.7H655V415.1H654V416.2H653V418.9H652V416.9H651V416.9H650V415.6H649V417.1H648V416.2H647V416H646V418.8H645V416.6H644V415.7H643V416.9H642V416.3H641V418.7H640V417.3H639V418.8H638V417.9H637V414.9H636V415H635V415.3H634V414.8H633V416.3H632V413.5H631V414H630V416.7H629V415.5H628V419.1H627V413.5H626V416.7H625V416.5H624V415.4H623V414.6H622V416.7H621V417.2H620V415.6H619V416.6H618V416.7H617V419.9H616V417.6H615V418.3H614V416.2H613V415.5H612V414H611V415.4H610V416.1H609V417.4H608V415.9H607V416.1H606V416.7H605V415.2H604V415.6H603V416.8H602V415.8H601V416.6H600V413.2H599V415.8H598V415.4H597V415H596V413.5H595V412H594V410.5H593V410.7H592V410.4H591V409.8H590V411.6H589V412.6H588V412.1H587V413H586V413.2H585V414.4H584V414.9H583V416.4H582V416.7H581V414.3H580V415.4H579V412H578V410.7H577V409.8H576V415.1H575V416.8H574V413.3H573V415.5H572V414H571V412.9H570V415.2H569V415.8H568V415.8H567V415.5H566V418.5H565V416.5H564V417.9H563V414.9H562V415.6H561V416H560V416.5H559V413H558V413.1H557V415.1H556V413.6H555V416.4H554V413.8H553V415.7H552V416.5H551V416.2H550V415.5H549V415.5H548V418.3H547V415.9H546V414.6H545V415.6H544V416H543V418.6H542V415.9H541V416H540V415.2H539V413.5H538V414.1H537V411.6H536V413.5H535V414.5H534V414H533V414.6H532V414.4H531V414.8H530V415.4H529V419H528V415.6H527V415.4H526V415.6H525V416.8H524V415.2H523V416.2H522V415.8H521V416.3H520V415.1H519V413.6H518V414.6H517V414.7H516V414.5H515V414.5H514V414.2H513V414.4H512V414.1H511V415.6H510V414.8H509V415H508V413.6H507V417.7H506V415H505V416.5H504V415.9H503V416.7H502V415.4H501V415.5H500V415.4H499V416.6H498V419.4H497V416.3H496V416.9H495V415.3H494V414.3H493V415.9H492V420.2H491V416.2H490V419H489V415.8H488V415.1H487V415.2H486V416.5H485V415.5H484V418.3H483V416.3H482V415.3H481V418.2H480V416H479V414.3H478V416.7H477V415H476V415.5H475V416.9H474V415.5H473V415.9H472V414H471V415.8H470V414.9H469V415.4H468V417.1H467V417.3H466V416.6H465V415H464V415.2H463V416.3H462V417.2H461V415.9H460V416.8H459V417.3H458V416.4H457V418.1H456V415.4H455V415H454V416.8H453V415.9H452V415.2H451V414.5H450V416.1H449V414.4H448V410.6H447V410.6H446V412.1H445V415.7H444V415.5H443V416.6H442V414.4H441V415.8H440V415.7H439V416.2H438V415.3H437V413H436V413.6H435V413.5H434V414.8H433V414.9H432V415.1H431V416.8H430V415H429V414.2H428V417.1H427V414.4H426V414.5H425V417.7H424V414.7H423V414.3H422V417.4H421V414.8H420V414.3H419V412.8H418V413.1H417V414.7H416V415.1H415V413.5H414V413.7H413V414.2H412V416.3H411V414.6H410V413.7H409V413.7H408V413.8H407V411.5H406V411.2H405V411.2H404V412.2H403V413H402V412.6H401V411H400V413H399V413.8H398V412.5H397V413.7H396V413.8H395V414.2H394V413.3H393V413.9H392V414.9H391V413.1H390V414H389V412.8H388V412.2H387V413H386V414.9H385V416.5H384V416.3H383V413.3H382V418.5H381V415.8H380V416H379V416.4H378V415.5H377V416.8H376V416.9H375V413.9H374V415.1H373V414.4H372V415.9H371V415.2H370V416.2H369V414.9H368V416.7H367V415.3H366V415.5H365V416.2H364V413.5H363V415.5H362V415.1H361V415.4H360V415.5H359V415.3H358V416.2H357V416.5H356V416.3H355V415.4H354V417H353V416.7H352V415.2H351V417.6H350V416.6H349V415.9H348V413.5H347V415.5H346V415.7H345V417.1H344V419.1H343V415.9H342V418.1H341V416.6H340V416.2H339V416H338V416.5H337V419.1H336V415.3H335V415.8H334V417.1H333V413.3H332V418.9H331V417.3H330V415.8H329V416.5H328V417.5H327V420.1H326V418.1H325V415.8H324V412.9H323V416.1H322V413.9H321V415.2H320V414.1H319V415.1H318V412.7H317V413.3H316V413.3H315V414.9H314V416.5H313V414.9H312V419.5H311V415.2H310V415.9H309V415.7H308V416.8H307V416.4H306V416.6H305V414.5H304V413.3H303V409.7H302V409.7H301V409.7H300V409.7H299Z" fill="#57b88e"/></svg>
<div class="cl">Bass</div>
<div class="ct">[Bass][Local][4.2 (latest)]</div>
<div class="cb" style="box-shadow:inset 0 0 0 1.8px #52b088"></div>
</div>
<div class="clip" style="top:452px;background:#344a50">
<svg width="649" height="80" viewBox="298 452 649 80" preserveAspectRatio="none"><path d="M299,491H300V491H301V491H302V491H303V485H304V485.1H305V484.8H306V482.7H307V485.5H308V484.1H309V483.2H310V484.6H311V484.2H312V484.9H313V483.4H314V483.6H315V484.3H316V482.7H317V481.1H318V483.5H319V485H320V482.6H321V485.1H322V482.8H323V482.4H324V486H325V484H326V481.9H327V481.9H328V481.5H329V481.9H330V478.7H331V480H332V478.5H333V479H334V475.2H335V478.9H336V478.4H337V475.4H338V479.1H339V479.1H340V480.5H341V476.3H342V478.4H343V481.2H344V481.4H345V483.9H346V482.2H347V480.5H348V481.8H349V484.1H350V483.4H351V484H352V481.1H353V484.7H354V483.6H355V487.3H356V482H357V486.6H358V484.2H359V483.8H360V482.4H361V485.1H362V485.3H363V484.9H364V487.6H365V484.3H366V485H367V484.4H368V482.1H369V485.7H370V487.5H371V482.6H372V485.3H373V484.5H374V484H375V487.8H376V485.1H377V482.2H378V484.9H379V484.6H380V485.3H381V484.4H382V486H383V485.3H384V484.5H385V485.6H386V486.6H387V485.6H388V484.7H389V485.1H390V485.9H391V486.6H392V485.5H393V485.7H394V486H395V486.2H396V485.4H397V484.8H398V485.9H399V485.7H400V484.8H401V485.6H402V486.6H403V485.1H404V485.1H405V485.6H406V485.8H407V485.4H408V486.5H409V486.2H410V483.8H411V488.1H412V487.5H413V485H414V485H415V486.1H416V485.5H417V486H418V484.4H419V485.3H420V485.3H421V485.2H422V485.4H423V485.7H424V485H425V485.7H426V484H427V485.9H428V485.9H429V487H430V484.6H431V485H432V486.1H433V485.3H434V488H435V485.1H436V485.3H437V486.2H438V483.7H439V486.3H440V485.2H441V483.7H442V484.9H443V485.5H444V486H445V484.4H446V486.5H447V485H448V483.6H449V477.6H450V478.9H451V478.3H452V478.7H453V478.9H454V477.6H455V475.1H456V476.8H457V478.2H458V473.4H459V473.4H460V478H461V477.2H462V478.1H463V483.6H464V473.8H465V478.4H466V474.3H467V479.2H468V482.5H469V483H470V485.8H471V481.8H472V481.2H473V481.6H474V482.3H475V481.4H476V483.4H477V481.5H478V482.7H479V479.4H480V482H481V480.8H482V480.7H483V482.2H484V480.7H485V479.7H486V485H487V482.7H488V486.1H489V482H490V480.8H491V480.9H492V481.8H493V481.2H494V481H495V486H496V484.8H497V483.5H498V483.4H499V482.3H500V478.6H501V482.6H502V481.2H503V481.7H504V479.2H505V482.9H506V478.3H507V483.6H508V483.4H509V479H510V481.3H511V486.4H512V482H513V483.6H514V481.9H515V482.9H516V481.2H517V481.7H518V485.8H519V483.6H520V483.5H521V483.6H522V481.3H523V481.5H524V481.3H525V482.3H526V479.2H527V482.3H528V486.2H529V483.2H530V481.9H531V481.9H532V483H533V482.9H534V484.7H535V482.9H536V483.2H537V481.9H538V482.1H539V480.4H540V484H541V482.6H542V483.4H543V482.1H544V483H545V486.4H546V482.5H547V482.7H548V486.1H549V484H550V482.9H551V484.8H552V484H553V483.4H554V482.4H555V482.5H556V483.4H557V485.2H558V484H559V483.5H560V484.3H561V480.2H562V485.5H563V482.8H564V485.7H565V483.7H566V484.4H567V486.1H568V483.6H569V485.4H570V486.4H571V484.6H572V485.7H573V485H574V484.6H575V483H576V484.8H577V485.5H578V484.5H579V474.2H580V477.2H581V482.4H582V480.4H583V478H584V480.4H585V476.9H586V472.1H587V480H588V478.6H589V482.1H590V477.6H591V478.9H592V476.4H593V476.8H594V477.8H595V478.1H596V479.1H597V476.4H598V481.6H599V480.7H600V481.1H601V482.6H602V481H603V483H604V483.4H605V482.1H606V481.8H607V482.7H608V483.9H609V481.9H610V481.4H611V482.4H612V485.9H613V482.2H614V482.7H615V478.8H616V480.8H617V481.5H618V480.9H619V482.3H620V484.9H621V485.5H622V482.9H623V483.4H624V478.7H625V480.9H626V483.4H627V481.5H628V482.4H629V484.4H630V483.2H631V478.7H632V483H633V483.6H634V482.6H635V481.6H636V481.2H637V482.8H638V480.8H639V482.8H640V483.4H641V483.8H642V482.3H643V481.4H644V482.1H645V480.9H646V484.6H647V482.2H648V481H649V483.5H650V484.3H651V484.7H652V482.1H653V481.7H654V486.1H655V485.2H656V483.5H657V483.5H658V481.5H659V483.1H660V481.1H661V482.9H662V485.2H663V481.7H664V484.6H665V483.1H666V483.1H667V483H668V481.7H669V481.8H670V480.7H671V480.8H672V482.7H673V482.9H674V481.1H675V481.5H676V479.4H677V481.4H678V481.7H679V484.4H680V481.9H681V480.6H682V483.2H683V481.7H684V484.9H685V478.6H686V476.9H687V476H688V482.8H689V482.6H690V477.5H691V477.8H692V471.1H693V476.1H694V476.6H695V474.1H696V482H697V477.3H698V472.4H699V477.8H700V478.1H701V476.8H702V477.1H703V475.2H704V477H705V481.4H706V478.4H707V477.9H708V479H709V478.2H710V478.3H711V476.3H712V480.5H713V476.8H714V475.8H715V479H716V477.7H717V475.4H718V479.7H719V478.1H720V474.6H721V470.1H722V475.4H723V476.5H724V472.4H725V472.9H726V477.3H727V475.9H728V475.4H729V476.3H730V475.5H731V480.2H732V476.6H733V476.5H734V470.6H735V479H736V477.1H737V481.7H738V475.2H739V481H740V474.1H741V474.3H742V481.2H743V472.1H744V475.1H745V477.3H746V469.5H747V477.5H748V474.8H749V477.5H750V477.6H751V477.5H752V476.4H753V478H754V482.7H755V470.8H756V476.1H757V477.1H758V477.9H759V476.6H760V476.8H761V475.6H762V475.2H763V480.7H764V476.7H765V477.9H766V480.4H767V476.3H768V477.5H769V475.9H770V475H771V471.9H772V476.4H773V472.6H774V482.9H775V475.1H776V481.1H777V471.3H778V479H779V475.3H780V478.6H781V477.5H782V473.4H783V476.1H784V478.2H785V479.2H786V482.7H787V476.3H788V475.8H789V472.9H790V482.1H791V478.5H792V475.6H793V475.4H794V478.8H795V481.1H796V478.7H797V483.8H798V478.3H799V483.6H800V482.1H801V483H802V477.7H803V483.5H804V485.8H805V486H806V486H807V482.8H808V482.3H809V483.3H810V482.8H811V480.8H812V479.5H813V478.9H814V481H815V478.5H816V484.7H817V483H818V481.9H819V482.7H820V484H821V478.7H822V479H823V481.5H824V480.7H825V482.3H826V484.7H827V481.5H828V483H829V483H830V482.9H831V480.2H832V480.1H833V480.9H834V482.1H835V482.8H836V480.3H837V480H838V480.4H839V477.5H840V479.4H841V482.3H842V479.2H843V476.3H844V479.4H845V478.7H846V477.8H847V476H848V476.4H849V478.7H850V472.8H851V482.8H852V476.6H853V478.2H854V476.1H855V476.5H856V478H857V479.5H858V477.8H859V477.5H860V479.8H861V480.7H862V480.1H863V481H864V480.2H865V479.8H866V482.5H867V480.8H868V482.3H869V476.8H870V482.2H871V480.2H872V482H873V481.5H874V483.8H875V482.5H876V482.1H877V477.8H878V482.4H879V484.2H880V480.3H881V481.5H882V482.7H883V483.1H884V481.2H885V482.5H886V478.9H887V485.6H888V480.3H889V481.5H890V484.9H891V483.7H892V482.8H893V482.1H894V483H895V482.3H896V483.8H897V486.2H898V483.2H899V483.1H900V483.1H901V483.6H902V484H903V482.5H904V484.2H905V483.4H906V484.7H907V484.8H908V484.3H909V485.2H910V485.3H911V487H912V486.7H913V487.1H914V487.7H915V488.2H916V487.3H917V487.4H918V488.1H919V488.1H920V487.9H921V488.6H922V489.6H923V489.6H924V489.4H925V490H926V488.9H927V490H928V490.3H929V490.4H930V490.7H931V490.6H932V490.9H933V491H934V491H935V491H936V491H937V491H938V491H939V491H940V491H941V491H942V491H943V491H944V491H945V491H946V491H947V492.8H946V492.8H945V492.8H944V492.8H943V492.8H942V492.8H941V492.8H940V492.8H939V492.8H938V492.8H937V492.8H936V492.8H935V492.8H934V492.8H933V492.8H932V492.8H931V493.4H930V493.2H929V493.5H928V493.9H927V493.8H926V494.3H925V495.1H924V494.5H923V495.2H922V496.2H921V495.7H920V494.8H919V495.6H918V496.1H917V497.3H916V496.6H915V497H914V497H913V498.6H912V498.5H911V497.1H910V498.4H909V499.1H908V498.9H907V504.1H906V501.1H905V502.6H904V499.8H903V500.4H902V500.6H901V502.3H900V500.8H899V502.5H898V502.2H897V507H896V506.3H895V502.3H894V501.5H893V501.9H892V502.3H891V502.8H890V502.2H889V502.8H888V503.4H887V501.9H886V502.6H885V501.8H884V502.3H883V503.2H882V502.8H881V502.8H880V502H879V509.2H878V501.4H877V499.8H876V501.8H875V501.8H874V503.2H873V503H872V509H871V502.5H870V498.9H869V502.7H868V500.6H867V502.3H866V502.2H865V501.6H864V498.7H863V504.1H862V503.5H861V501H860V505.8H859V505.2H858V506.2H857V511.3H856V504.9H855V505.8H854V504.2H853V505.5H852V500.6H851V507.4H850V508.2H849V507H848V512.6H847V505H846V500.2H845V504.6H844V506.6H843V500.7H842V503.2H841V502.7H840V502.3H839V500.3H838V500.7H837V500.1H836V502.9H835V503.2H834V498.6H833V503.7H832V503.2H831V502H830V503H829V500.8H828V503.5H827V500.5H826V503.1H825V500.8H824V503.2H823V502.8H822V502.6H821V499H820V500.9H819V502.9H818V502.7H817V502H816V502.3H815V502.6H814V506.9H813V502.2H812V500.7H811V507.4H810V500.1H809V502H808V501.8H807V501.7H806V502.1H805V500.8H804V500.9H803V497.8H802V503.5H801V500.8H800V506.7H799V505.9H798V499.6H797V503.4H796V501.1H795V504.7H794V505.3H793V501.3H792V504.7H791V502.3H790V514.8H789V506.5H788V505.2H787V507.9H786V508.2H785V505.9H784V506.2H783V508.1H782V505.6H781V507.4H780V506.6H779V506.9H778V506.6H777V506.6H776V507.4H775V506H774V514.6H773V507.7H772V508.5H771V513.1H770V508H769V514.1H768V504.9H767V506.3H766V503.9H765V505.4H764V508.9H763V508.3H762V516.8H761V503H760V507.3H759V508.6H758V508.1H757V512.7H756V509.5H755V507.6H754V507.5H753V508.3H752V506.6H751V507.5H750V505.6H749V504.7H748V507.8H747V516.1H746V506.7H745V507.7H744V506.4H743V505.7H742V503.6H741V506.2H740V509.8H739V505.1H738V506.9H737V509.9H736V509.9H735V509.5H734V513.3H733V511.6H732V509.1H731V513.4H730V504.1H729V509.3H728V506.6H727V508.5H726V506.2H725V505.7H724V502.2H723V507.4H722V505.7H721V508.5H720V505.4H719V502.2H718V505.5H717V505.1H716V504.9H715V508.6H714V505.9H713V506.8H712V505.2H711V505.6H710V506.2H709V512.8H708V504.2H707V507.6H706V508.3H705V505.6H704V512.6H703V507.9H702V505.4H701V513.8H700V503.2H699V507.8H698V509.8H697V505.8H696V517.3H695V507.9H694V507H693V509.6H692V513.5H691V516.2H690V508.8H689V506.2H688V506.1H687V507.2H686V502.2H685V498.9H684V503.4H683V502.9H682V501.9H681V501.9H680V506.3H679V499.6H678V500.6H677V503.4H676V501.9H675V506.8H674V503.3H673V502.5H672V503.1H671V502.9H670V502.1H669V498.5H668V500.8H667V500.9H666V507.9H665V507.6H664V501H663V502.2H662V500.8H661V502.1H660V500.6H659V500.5H658V500.8H657V501.4H656V501.7H655V500.6H654V501.4H653V502.1H652V502.1H651V501.9H650V498.1H649V502.8H648V501.1H647V502.2H646V505.3H645V500.9H644V501.1H643V500.7H642V502.5H641V501.7H640V507.8H639V500.6H638V498.3H637V502.1H636V500.2H635V503H634V499.9H633V502.8H632V500.4H631V498.4H630V500.4H629V506H628V502.3H627V502.1H626V501.7H625V500.5H624V502.9H623V501.2H622V500.6H621V498.2H620V501.8H619V500.8H618V502.4H617V499.6H616V501.3H615V499.2H614V506.8H613V501.4H612V502.4H611V500.6H610V500.7H609V506H608V501.1H607V502H606V501.4H605V499.4H604V498.4H603V500.9H602V502.8H601V500.6H600V498.1H599V502.4H598V502.9H597V504.9H596V512.4H595V505.6H594V506.3H593V505.2H592V500.8H591V505.2H590V502.6H589V505.3H588V501.5H587V504.4H586V510.7H585V504.7H584V505H583V505.2H582V503.3H581V503.3H580V506.1H579V498.5H578V496.4H577V498H576V500.1H575V500.3H574V500.2H573V500.2H572V499.8H571V502.3H570V499.5H569V500.8H568V500.1H567V499.8H566V499.3H565V500.6H564V503.9H563V501.2H562V499.4H561V500.1H560V500.2H559V501.4H558V499.3H557V500.1H556V500.7H555V498.5H554V497.9H553V499.4H552V501.2H551V499.4H550V497H549V501.5H548V501.2H547V500.4H546V499.1H545V505.5H544V502.7H543V500.6H542V501.7H541V500.6H540V501.8H539V497.6H538V499.2H537V498H536V501.9H535V501.4H534V501H533V500.5H532V497.4H531V500.3H530V501.2H529V502.3H528V500H527V497.7H526V501.4H525V506.3H524V501.7H523V501.7H522V506.6H521V503.6H520V504.1H519V502.1H518V500.4H517V501H516V501.9H515V500.8H514V500.9H513V502.5H512V502.3H511V501.1H510V499.9H509V499.6H508V501.2H507V502.2H506V503.6H505V501.2H504V501.2H503V501.4H502V500.1H501V501.6H500V506H499V501.8H498V497.9H497V502.3H496V499.5H495V502.5H494V500.8H493V501.5H492V502.5H491V500.4H490V501H489V501.5H488V502.3H487V498.4H486V500.9H485V506.8H484V501.5H483V504.2H482V501.4H481V501.4H480V502.5H479V502.1H478V500.2H477V501.4H476V501.5H475V502.1H474V501.3H473V500.7H472V502.7H471V501.7H470V502.3H469V503.6H468V504.2H467V503.8H466V505H465V505.1H464V505.5H463V508.1H462V509.7H461V507H460V506.3H459V504.7H458V504.1H457V504.6H456V511.5H455V502.1H454V504.3H453V510.3H452V504.8H451V502.2H450V501.4H449V499.5H448V498.2H447V498.7H446V497.7H445V497.6H444V496.8H443V498.8H442V497.9H441V498.4H440V497.7H439V497.4H438V497.5H437V498.6H436V497.7H435V496.4H434V499.5H433V499.4H432V498.8H431V501.8H430V498.7H429V501.2H428V499.6H427V500.8H426V502.3H425V502.8H424V499.6H423V499H422V498.3H421V497.4H420V502.4H419V497.2H418V499.5H417V499H416V497.7H415V498.3H414V498.4H413V499.1H412V498.3H411V498.2H410V498.4H409V496.6H408V501H407V496.5H406V498.9H405V497.7H404V497.3H403V498.2H402V496H401V497.5H400V497.8H399V501.6H398V498.9H397V497.6H396V498.4H395V497.9H394V496.5H393V497.5H392V498.7H391V498.8H390V497.5H389V498.3H388V498.2H387V498.8H386V496.3H385V497.8H384V497.9H383V498H382V499.3H381V498.2H380V499.3H379V498.4H378V496H377V498.4H376V499.6H375V501.9H374V498H373V498.6H372V498.5H371V499H370V501.5H369V498.7H368V498.5H367V498.2H366V499.5H365V499.7H364V496.2H363V502.1H362V498.3H361V499.2H360V498.4H359V502.4H358V496.5H357V499.9H356V500H355V496.6H354V498.9H353V500.2H352V498.7H351V499.9H350V499H349V499.6H348V501.8H347V503.5H346V501.5H345V499H344V504.6H343V503.7H342V504.6H341V509H340V502.9H339V502.9H338V504.9H337V504.1H336V499.9H335V502.4H334V510.9H333V502.3H332V503.8H331V504.7H330V503.8H329V504.8H328V502.2H327V500.8H326V500.2H325V501.3H324V503.7H323V500.9H322V500.3H321V500.6H320V500.8H319V500.8H318V505.6H317V499.6H316V500.2H315V499.2H314V500.8H313V500.4H312V501H311V500.7H310V500.3H309V500.3H308V497.5H307V496.4H306V499.3H305V499H304V499.9H303V492.8H302V492.8H301V492.8H300V492.8H299Z" fill="#68cdb8"/></svg>
<div class="cl">Residual</div>
<div class="ct">[Residual][Local][4.2 (latest)]</div>
<div class="cb" style="box-shadow:inset 0 0 0 1.8px #5fc4b0"></div>
</div>
<!-- playhead -->
<div style="left:405.9px;top:99px;width:1.3px;height:569px;background:#f2f2f2"></div>
<svg style="left:400px;top:96px" width="14" height="8" viewBox="400 96 14 8"><path d="M401.4 97.2H411.6L406.5 102Z" fill="#eee"/></svg>
<!-- scrollbars -->
<div style="left:951.2px;top:117.6px;width:8.1px;height:524.2px;background:#dcdcdc"></div>
<div style="left:951px;top:641.8px;width:9px;height:26px;background:#2a2a2a"></div>
<svg style="left:949px;top:643px" width="12" height="24" viewBox="949 643 12 24" stroke="#e8e8e8" stroke-width="1.2" fill="none"><path d="M952.2 648.6H958.2M955.2 645.6V651.6M952.4 661.5H958"/></svg>
<div style="left:296.5px;top:668.2px;width:586.4px;height:8px;background:#dcdcdc"></div>
<div style="left:882.9px;top:668.2px;width:28px;height:8px;box-sizing:border-box;border:1px solid #bdbdbd;border-left:none;background:#2c2c2c"></div>
<svg style="left:912px;top:666px" width="40" height="12" viewBox="912 666 40 12" stroke="#e8e8e8" stroke-width="1.2" fill="none" stroke-linecap="round" stroke-linejoin="round"><path d="M914.7 672.3H920.7M917.7 669.3V675.3M928.6 672.3H934M940.4 672.3H948.2M942.4 670.2L940.3 672.3L942.4 674.4M946.2 670.2L948.3 672.3L946.2 674.4"/></svg>
<!-- right panel -->
<div id="rp"></div>
<div id="rp2"></div>
<div class="hl" style="top:139px"></div>
<div class="hl" style="top:172.6px"></div>
<div id="queue">QUEUE</div>
<div class="grp" style="left:970.6px;top:146.8px;width:184px;height:18.8px;--bc:#22c6ce;--bw:1.9px;border-radius:4px;background:#263030;">
  <div class="dv" style="left:91.2px"></div>
</div>
<div class="qb" style="left:972px;width:90px;top:148.6px;color:#9aa3a3;">CANCEL ALL</div>
<div class="qb" style="left:1062px;width:90px;top:148.6px;color:#f4f4f4;">CLEAR PROCESSED</div>
<svg style="left:970px;top:178px" width="20" height="17" viewBox="970 178 20 17" fill="none" stroke="#d4d8d8" stroke-width="1.3">
  <rect x="972.9" y="179.9" width="14.5" height="10.3" rx="1"/>
  <rect x="972.4" y="187.9" width="15.5" height="2.9" rx="0.8" fill="#f6f6f6" stroke="none"/>
  <path d="M978.4 190.6H982L982.8 192.4H977.6Z" fill="#c8cccc" stroke="none"/>
  <rect x="976" y="192.1" width="8.3" height="1.8" rx="0.7" fill="#f0f0f0" stroke="none"/>
</svg>
<div class="qi top" style="left:971.6px;top:198.2px;width:183.4px;"><span>CALL ME</span><svg width="16" height="12" viewBox="0 0 16 12" fill="none" stroke="#f4ffff" stroke-width="1.1"><path d="M1 6.8L4.6 10.4L14.4 1.2"/></svg></div>
<div id="xbtn">X</div>
<div class="qi" style="left:990px;top:223.2px;width:165px;"><span>VOCAL</span><svg width="16" height="12" viewBox="0 0 16 12" fill="none" stroke="#f4ffff" stroke-width="1.1"><path d="M1 6.8L4.6 10.4L14.4 1.2"/></svg></div>
<div class="qi" style="left:990px;top:248.2px;width:165px;"><span>DRUMS</span><svg width="16" height="12" viewBox="0 0 16 12" fill="none" stroke="#f4ffff" stroke-width="1.1"><path d="M1 6.8L4.6 10.4L14.4 1.2"/></svg></div>
<div class="qi" style="left:990px;top:273.2px;width:165px;"><span>BASS</span><svg width="16" height="12" viewBox="0 0 16 12" fill="none" stroke="#f4ffff" stroke-width="1.1"><path d="M1 6.8L4.6 10.4L14.4 1.2"/></svg></div>
<div class="qi" style="left:990px;top:298.2px;width:165px;"><span>OTHER</span><svg width="16" height="12" viewBox="0 0 16 12" fill="none" stroke="#f4ffff" stroke-width="1.1"><path d="M1 6.8L4.6 10.4L14.4 1.2"/></svg></div>

</div></div></body></html>
